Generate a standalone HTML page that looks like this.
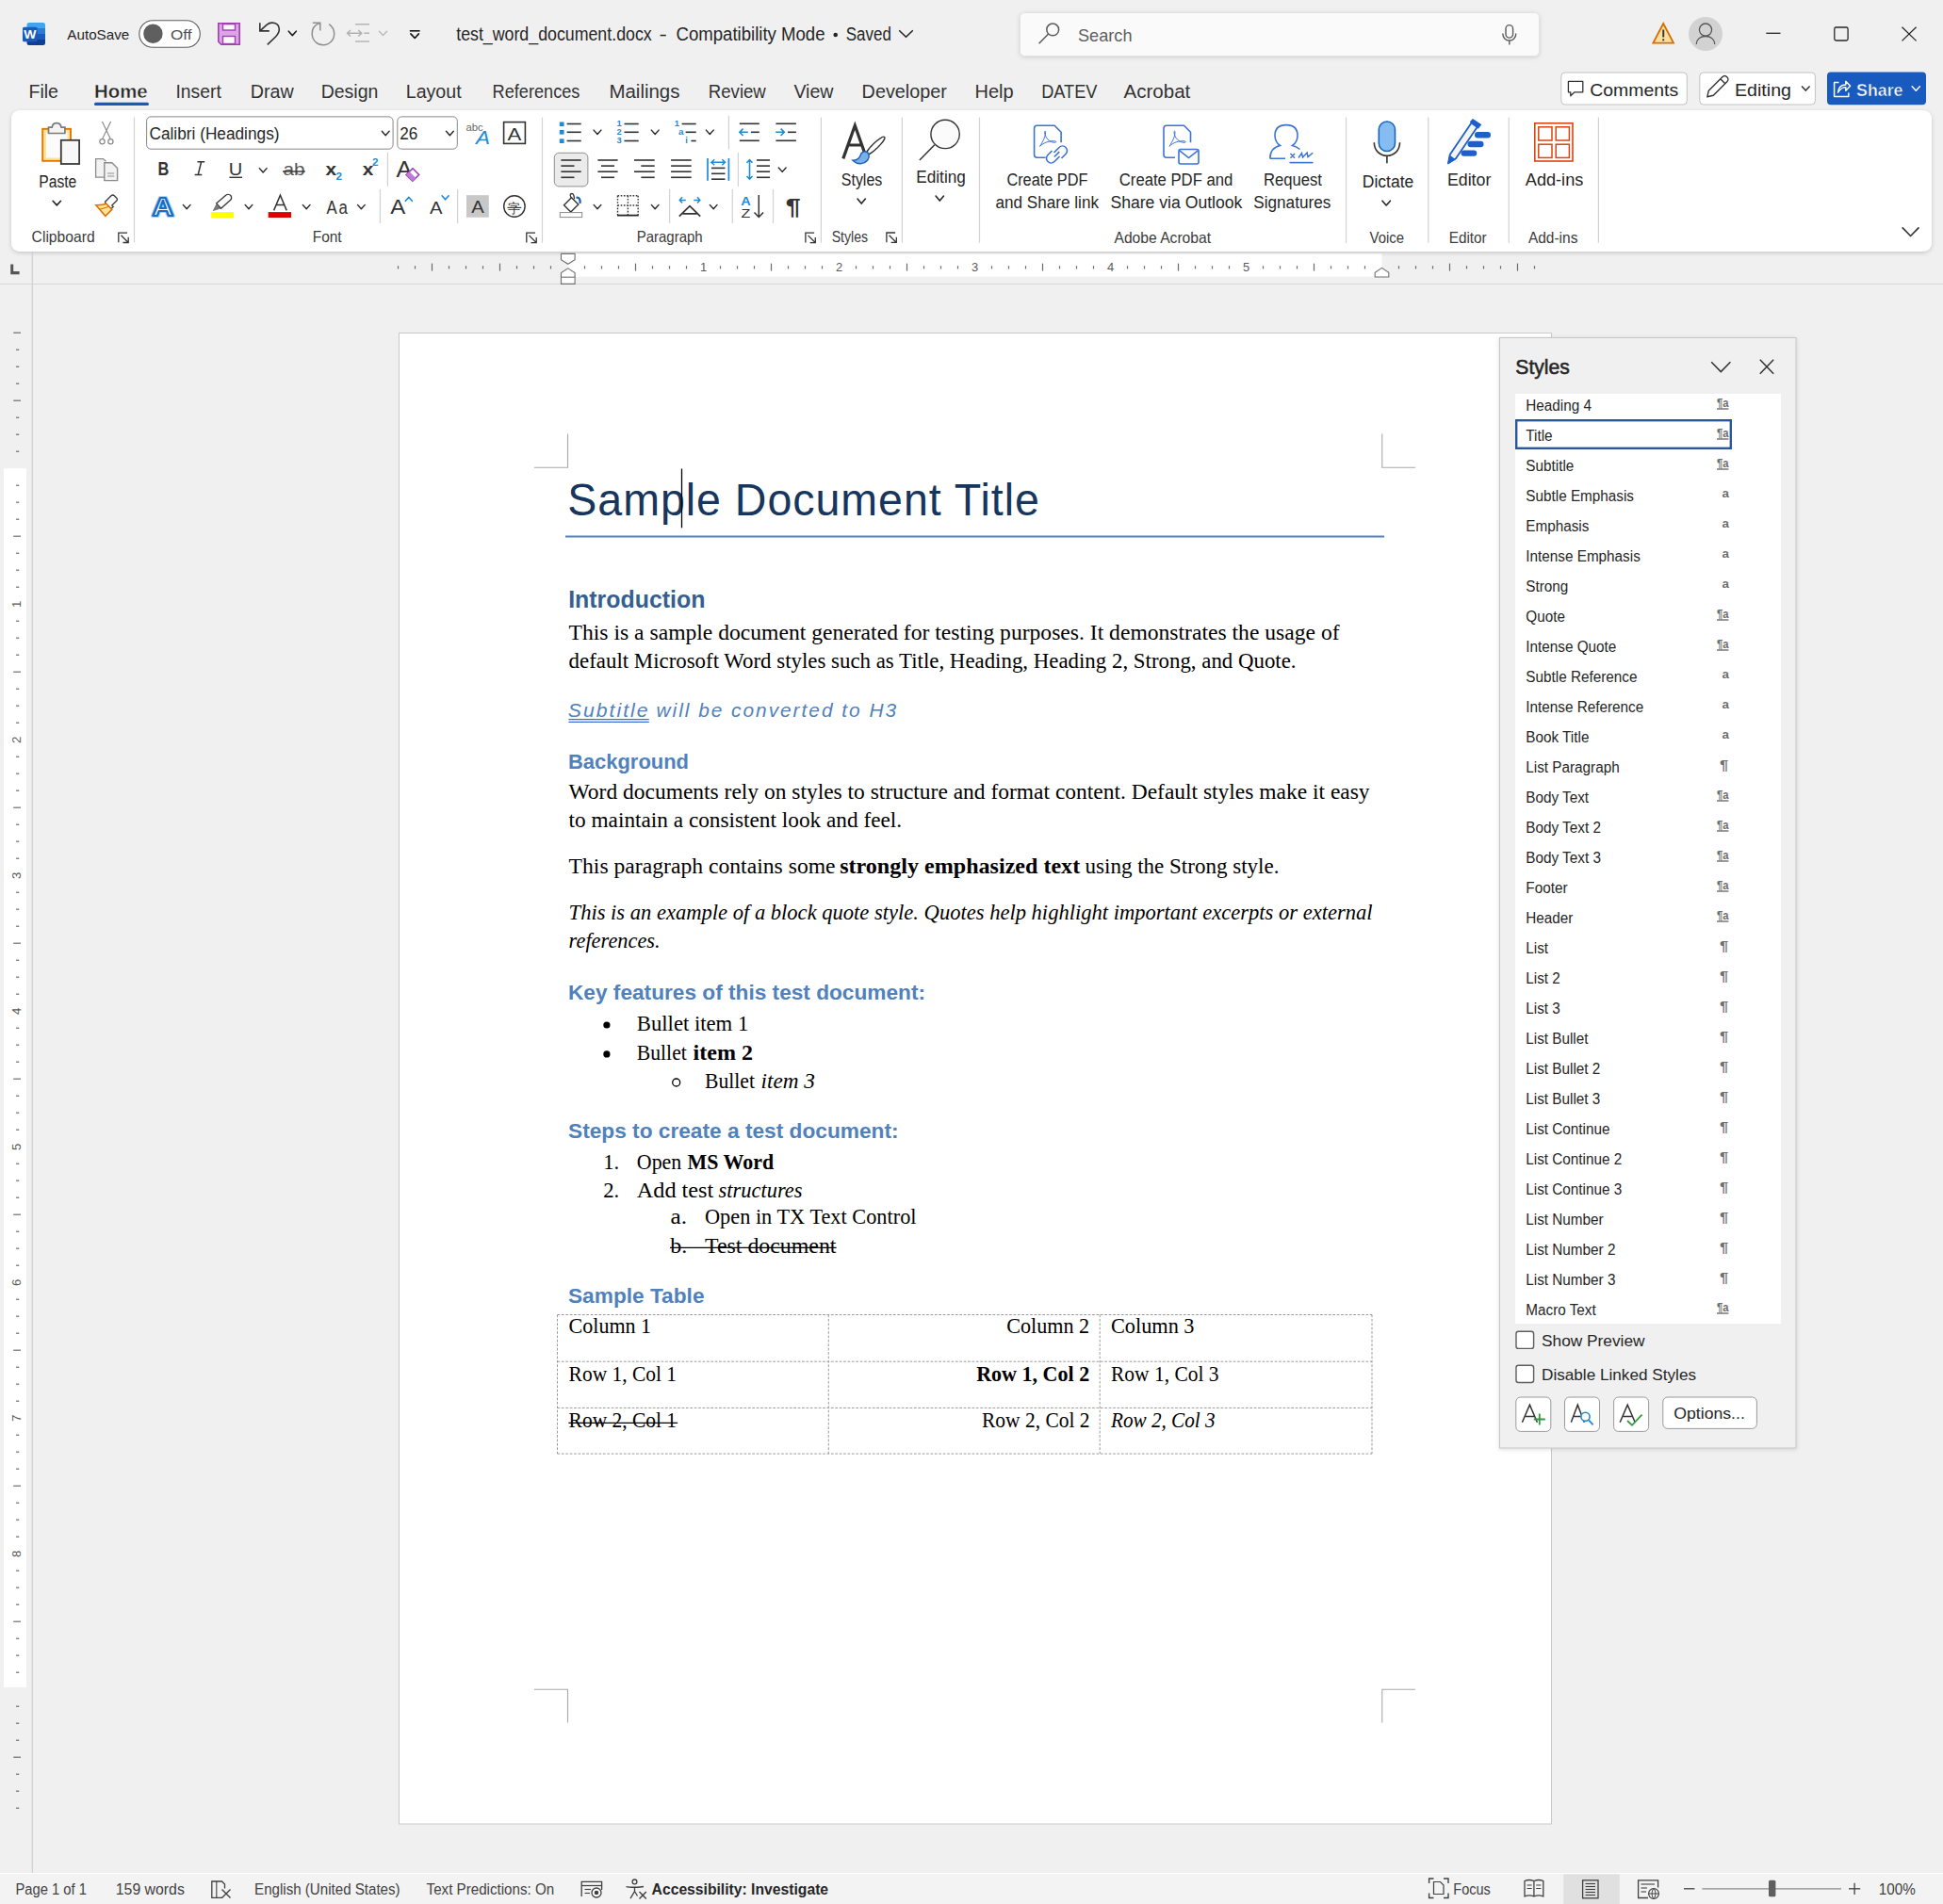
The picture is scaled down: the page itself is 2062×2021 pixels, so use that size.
<!DOCTYPE html>
<html><head><meta charset="utf-8"><title>Word</title>
<style>
html,body{margin:0;padding:0;width:2062px;height:2021px;overflow:hidden;background:#f0f0f0;}
svg{position:absolute;left:0;top:0;display:block;}
.s{font-family:"Liberation Sans",sans-serif;}
.r{font-family:"Liberation Serif",serif;}
</style></head><body>
<svg width="2062" height="2021" viewBox="0 0 2062 2021">
<defs>
<filter id="sh" x="-5%" y="-20%" width="110%" height="150%"><feDropShadow dx="0" dy="1.5" stdDeviation="2" flood-color="#000" flood-opacity="0.18"/></filter>
<filter id="sh2" x="-10%" y="-10%" width="120%" height="120%"><feDropShadow dx="0" dy="1" stdDeviation="2" flood-color="#000" flood-opacity="0.14"/></filter>
</defs>
<rect x="0" y="0" width="2062" height="2021" fill="#f0f0f0"/>
<clipPath id="wclip"><rect x="28.5" y="24" width="19.5" height="24" rx="2.5"/></clipPath>
<g clip-path="url(#wclip)"><rect x="28" y="24" width="20" height="6" fill="#41a5ee"/><rect x="28" y="30" width="20" height="6" fill="#2b7cd3"/><rect x="28" y="36" width="20" height="6" fill="#185abd"/><rect x="28" y="42" width="20" height="6" fill="#103f91"/></g>
<rect x="24" y="28.7" width="15.6" height="15.6" fill="#185abd" rx="1.5"/>
<text class="s" x="25.2" y="40.8" font-size="12.5" textLength="13.2" lengthAdjust="spacingAndGlyphs" font-weight="bold" fill="#ffffff">W</text>
<text class="s" x="71.3" y="41.7" font-size="15" textLength="66.0" lengthAdjust="spacingAndGlyphs" fill="#262626">AutoSave</text>
<rect x="147.8" y="21.7" width="64.5" height="28.6" rx="14.3" fill="#ffffff" stroke="#5c5c5c" stroke-width="1.1"/>
<circle cx="162.4" cy="35.8" r="10.2" fill="#5f5f5f"/>
<text class="s" x="181.0" y="41.9" font-size="15" textLength="22.5" lengthAdjust="spacingAndGlyphs" fill="#505050">Off</text>
<path d="M231.8 24.8 H254.2 V47.2 H234.8 L231.8 44.2 Z" stroke="#a33eb5" stroke-width="1.6" fill="#dca6e6" />
<rect x="236.5" y="25.6" width="13" height="6.4" fill="#fafafa" stroke="#a33eb5" stroke-width="1.4"/>
<rect x="236.5" y="38.5" width="13" height="8" fill="#fafafa" stroke="#a33eb5" stroke-width="1.4"/>
<path d="M275.8 24.2 V32.9 H285.8" stroke="#333333" stroke-width="1.6" fill="none" />
<path d="M276.4 32.3 L283 26.3 C288 22.2 296 24 296.3 31 C296.5 34.5 294.5 36.8 292.5 39 L283.8 47.3" stroke="#333333" stroke-width="1.6" fill="none" />
<path d="M306.3 33.2 L310.3 37.6 L314.3 33.2" stroke="#222" stroke-width="1.6" fill="none" stroke-linecap="round" stroke-linejoin="round"/>
<path d="M331.8 24.2 H339.8 V32.6" stroke="#8f8f8f" stroke-width="1.5" fill="none" />
<path d="M339.8 24.4 C333.5 26.5 330.8 31.5 331.2 36.5 C331.8 43.5 337 47.7 343 47.7 C349.5 47.7 354.7 42.5 354.7 36 C354.7 31.5 352.5 28 349.2 25.6" stroke="#8f8f8f" stroke-width="1.5" fill="none" />
<line x1="377" y1="25.8" x2="392" y2="25.8" stroke="#b0b0b0" stroke-width="1.4" />
<line x1="386.3" y1="35.2" x2="392" y2="35.2" stroke="#b0b0b0" stroke-width="1.4" />
<line x1="377" y1="44" x2="392" y2="44" stroke="#b0b0b0" stroke-width="1.4" />
<path d="M368.5 35.2 H383.8 M372 32 L368.5 35.2 L372 38.4 M380.3 32 L383.8 35.2 L380.3 38.4" stroke="#b0b0b0" stroke-width="1.4" fill="none" />
<path d="M402.5 33.2 L406.5 37.6 L410.5 33.2" stroke="#b8b8b8" stroke-width="1.4" fill="none" stroke-linecap="round" stroke-linejoin="round"/>
<line x1="434.8" y1="32.8" x2="445.6" y2="32.8" stroke="#111" stroke-width="1.6" />
<path d="M435.9 35.9 L440.2 40.5 L444.4 35.9" stroke="#111" stroke-width="1.6" fill="none" stroke-linecap="round" stroke-linejoin="round"/>
<text class="s" x="484.2" y="43.3" font-size="19.5" textLength="207.5" lengthAdjust="spacingAndGlyphs" fill="#262626">test_word_document.docx</text>
<rect x="700.6" y="36.8" width="6.2" height="1.5" fill="#262626" />
<text class="s" x="717.5" y="43.3" font-size="19.5" textLength="158.0" lengthAdjust="spacingAndGlyphs" fill="#262626">Compatibility Mode</text>
<circle cx="886.7" cy="37" r="2.3" fill="#262626"/>
<text class="s" x="897.8" y="43.3" font-size="19.5" textLength="48.0" lengthAdjust="spacingAndGlyphs" fill="#262626">Saved</text>
<path d="M954.7 32.7 L961.5 39.3 L968.3 32.7" stroke="#262626" stroke-width="1.6" fill="none" stroke-linecap="round" stroke-linejoin="round"/>
<rect x="1082.5" y="13.5" width="551" height="46" rx="5" fill="#fafafa" stroke="#e2e2e2" stroke-width="1" filter="url(#sh2)"/>
<circle cx="1117.2" cy="31.4" r="6.4" fill="none" stroke="#5b5b5b" stroke-width="1.5"/>
<line x1="1112.6" y1="36" x2="1102.6" y2="46.2" stroke="#5b5b5b" stroke-width="1.5" />
<text class="s" x="1144.0" y="43.9" font-size="19" textLength="57.5" lengthAdjust="spacingAndGlyphs" fill="#5f5f5f">Search</text>
<rect x="1598" y="26.6" width="7.6" height="13.5" rx="3.8" fill="none" stroke="#5b5b5b" stroke-width="1.4"/>
<path d="M1594.8 35.5 C1594.8 40 1597.8 43 1601.8 43 C1605.8 43 1608.8 40 1608.8 35.5 M1601.8 43 V47.4" stroke="#5b5b5b" stroke-width="1.4" fill="none" />
<path d="M1765.2 25 L1776 45.6 H1754.4 Z" stroke="#d86c00" stroke-width="1.8" fill="#fde0a0" stroke-linejoin="miter"/>
<rect x="1764.3" y="31.5" width="1.9" height="8" fill="#333333" />
<rect x="1764.3" y="41.3" width="1.9" height="2" fill="#333333" />
<circle cx="1810" cy="36" r="18" fill="#d2d2d2"/>
<circle cx="1810" cy="31.6" r="6.6" fill="none" stroke="#555" stroke-width="1.3"/>
<path d="M1800.2 47 C1800.5 41.5 1804.5 38.5 1810 38.5 C1815.5 38.5 1819.5 41.5 1819.8 47" stroke="#555" stroke-width="1.3" fill="none" />
<line x1="1874.3" y1="35.3" x2="1889.5" y2="35.3" stroke="#262626" stroke-width="1.3" />
<rect x="1946.8" y="29" width="14.3" height="14" rx="1.8" fill="none" stroke="#262626" stroke-width="1.3"/>
<line x1="2018.5" y1="28.8" x2="2033.6" y2="43.4" stroke="#262626" stroke-width="1.3" />
<line x1="2033.6" y1="28.8" x2="2018.5" y2="43.4" stroke="#262626" stroke-width="1.3" />
<text class="s" x="30.5" y="104.3" font-size="20.5" textLength="31.5" lengthAdjust="spacingAndGlyphs" fill="#333333">File</text>
<text class="s" x="100.0" y="104.3" font-size="20.5" textLength="56.6" lengthAdjust="spacingAndGlyphs" font-weight="bold" fill="#242424" stroke="#fff" stroke-width="0.35">Home</text>
<text class="s" x="186.5" y="104.3" font-size="20.5" textLength="48.3" lengthAdjust="spacingAndGlyphs" fill="#333333">Insert</text>
<text class="s" x="265.8" y="104.3" font-size="20.5" textLength="45.9" lengthAdjust="spacingAndGlyphs" fill="#333333">Draw</text>
<text class="s" x="340.7" y="104.3" font-size="20.5" textLength="60.7" lengthAdjust="spacingAndGlyphs" fill="#333333">Design</text>
<text class="s" x="430.8" y="104.3" font-size="20.5" textLength="58.8" lengthAdjust="spacingAndGlyphs" fill="#333333">Layout</text>
<text class="s" x="522.6" y="104.3" font-size="20.5" textLength="92.8" lengthAdjust="spacingAndGlyphs" fill="#333333">References</text>
<text class="s" x="646.4" y="104.3" font-size="20.5" textLength="75.1" lengthAdjust="spacingAndGlyphs" fill="#333333">Mailings</text>
<text class="s" x="751.8" y="104.3" font-size="20.5" textLength="61.0" lengthAdjust="spacingAndGlyphs" fill="#333333">Review</text>
<text class="s" x="842.4" y="104.3" font-size="20.5" textLength="42.1" lengthAdjust="spacingAndGlyphs" fill="#333333">View</text>
<text class="s" x="914.6" y="104.3" font-size="20.5" textLength="90.2" lengthAdjust="spacingAndGlyphs" fill="#333333">Developer</text>
<text class="s" x="1034.5" y="104.3" font-size="20.5" textLength="41.1" lengthAdjust="spacingAndGlyphs" fill="#333333">Help</text>
<text class="s" x="1105.2" y="104.3" font-size="20.5" textLength="59.3" lengthAdjust="spacingAndGlyphs" fill="#333333">DATEV</text>
<text class="s" x="1192.6" y="104.3" font-size="20.5" textLength="70.7" lengthAdjust="spacingAndGlyphs" fill="#333333">Acrobat</text>
<rect x="100" y="108.8" width="58" height="3.2" rx="1.6" fill="#1e56b9"/>
<rect x="1656.8" y="77" width="133.5" height="34" rx="4" fill="#ffffff" stroke="#c2c2c2" stroke-width="1"/>
<path d="M1664.4 86.3 H1679.8 V97.8 H1671 L1666.8 101.7 V97.8 H1664.4 Z" stroke="#333" stroke-width="1.3" fill="none" stroke-linejoin="round"/>
<text class="s" x="1687.3" y="102.2" font-size="19" textLength="93.8" lengthAdjust="spacingAndGlyphs" fill="#262626">Comments</text>
<rect x="1803.8" y="77" width="122.6" height="34" rx="4" fill="#ffffff" stroke="#c2c2c2" stroke-width="1"/>
<path d="M1811.8 102.8 L1813.3 96.3 L1827.8 81.8 C1829.3 80.3 1831.3 80.3 1832.8 81.8 C1834.3 83.3 1834.3 85.3 1832.8 86.8 L1818.3 101.3 Z M1825.8 83.8 L1830.8 88.8" stroke="#333" stroke-width="1.4" fill="none" stroke-linejoin="round"/>
<text class="s" x="1841.0" y="102.2" font-size="19" textLength="60.0" lengthAdjust="spacingAndGlyphs" fill="#262626">Editing</text>
<path d="M1912.5 91.9 L1916.3 96.1 L1920.1 91.9" stroke="#333" stroke-width="1.5" fill="none" stroke-linecap="round" stroke-linejoin="round"/>
<rect x="1939" y="76.5" width="105" height="34.8" rx="4" fill="#185abd"/>
<path d="M1951.5 87.5 H1946.6 V102.5 H1961.8 V98.5" stroke="#fff" stroke-width="1.5" fill="none" stroke-linejoin="round"/>
<path d="M1950.5 98.2 C1951 92.8 1954.5 90 1958.8 90 V86.2 L1963.6 91.2 L1958.8 96.2 V92.6 C1955.5 92.6 1952.8 94.5 1950.5 98.2 Z" stroke="#fff" stroke-width="1.4" fill="none" stroke-linejoin="round"/>
<text class="s" x="1970.0" y="102.2" font-size="19" textLength="49.5" lengthAdjust="spacingAndGlyphs" font-weight="bold" fill="#ffffff" stroke="#185abd" stroke-width="0.5">Share</text>
<path d="M2029.2 91.8 L2033.3 96.2 L2037.4 91.8" stroke="#fff" stroke-width="1.5" fill="none" stroke-linecap="round" stroke-linejoin="round"/>
<rect x="12" y="117" width="2038" height="150" rx="9" fill="#ffffff" filter="url(#sh)"/>
<rect x="45.2" y="136.8" width="29.8" height="34" fill="#fce49c" stroke="#e07800" stroke-width="1.9"/>
<rect x="49" y="140.5" width="22.5" height="27" fill="#fbfbfb" />
<path d="M51.5 141.5 V135.2 H55.2 C55.6 131.8 57.4 130.6 60.1 130.6 C62.8 130.6 64.6 131.8 65 135.2 H68.9 V141.5 Z" stroke="#7b7b7b" stroke-width="1.7" fill="#f4f4f4" />
<rect x="64.8" y="148.8" width="19.3" height="25.2" fill="#f8f8f8" stroke="#3a3a3a" stroke-width="1.8"/>
<text class="s" x="41.3" y="198.9" font-size="18" textLength="40.0" lengthAdjust="spacingAndGlyphs" fill="#262626">Paste</text>
<path d="M56.1 213.3 L60.3 217.9 L64.5 213.3" stroke="#262626" stroke-width="1.6" fill="none" stroke-linecap="round" stroke-linejoin="round"/>
<path d="M108.4 129 L117.3 147.6 M117.6 129 L108.6 147.6" stroke="#8c8c8c" stroke-width="1.2" fill="none" />
<circle cx="108.5" cy="150.2" r="2.6" fill="none" stroke="#8c8c8c" stroke-width="1.3"/>
<circle cx="117.4" cy="150.2" r="2.6" fill="none" stroke="#8c8c8c" stroke-width="1.3"/>
<path d="M115 188.2 H101.6 V168.6 H109.5 L112.5 171.2" stroke="#8c8c8c" stroke-width="1.3" fill="#f2f2f2" />
<path d="M110.8 191.6 V172.8 H118.8 L124.6 178.6 V191.6 Z" stroke="#8c8c8c" stroke-width="1.4" fill="#f2f2f2" />
<line x1="114" y1="184" x2="121.2" y2="184" stroke="#9a9a9a" stroke-width="1.1" />
<line x1="114" y1="187" x2="121.2" y2="187" stroke="#9a9a9a" stroke-width="1.1" />
<path d="M111.5 214.3 L118 207.8 C119 206.8 120.3 206.8 121.3 207.8 L123.8 210.3 C124.8 211.3 124.6 212.2 123.6 213.2 L118.8 218 L120.2 219.5 L118 221.7 L112 215.7 Z" stroke="#3a3a3a" stroke-width="1.3" fill="#fbfbfb" />
<path d="M112.8 216.3 C109.5 217.5 106 217.6 101.8 217.8 L111.8 229.3 L118.8 222.4 Z" stroke="#e07000" stroke-width="1.5" fill="#fce49c" />
<path d="M106 222.3 L114.8 219.5" stroke="#e07000" stroke-width="1.2" fill="none" />
<text class="s" x="33.6" y="257.2" font-size="16.5" textLength="67.0" lengthAdjust="spacingAndGlyphs" fill="#3b3b3b">Clipboard</text>
<path d="M125.8 257.3 V247.1 H135.0" stroke="#333" stroke-width="1.3" fill="none" />
<path d="M128.5 249.8 L136.0 257.3 M130.5 257.5 H136.2 V251.8" stroke="#333" stroke-width="1.3" fill="none" />
<line x1="142.5" y1="124.4" x2="142.5" y2="257.4" stroke="#d2d2d2" stroke-width="1.2" />
<rect x="155.6" y="123.9" width="261.5" height="34.3" rx="4.5" fill="#ffffff" stroke="#878787" stroke-width="1"/>
<text class="s" x="158.5" y="147.8" font-size="17.5" textLength="138.0" lengthAdjust="spacingAndGlyphs" fill="#262626">Calibri (Headings)</text>
<path d="M405.3 139.3 L409.2 143.7 L413.1 139.3" stroke="#262626" stroke-width="1.4" fill="none" stroke-linecap="round" stroke-linejoin="round"/>
<rect x="421.8" y="123.9" width="63.5" height="34.3" rx="4.5" fill="#ffffff" stroke="#878787" stroke-width="1"/>
<text class="s" x="424.3" y="147.8" font-size="17.5" textLength="19.0" lengthAdjust="spacingAndGlyphs" fill="#262626">26</text>
<path d="M473.5 139.3 L477.4 143.7 L481.3 139.3" stroke="#262626" stroke-width="1.4" fill="none" stroke-linecap="round" stroke-linejoin="round"/>
<text class="s" x="494.4" y="139.2" font-size="11.5" textLength="18.3" lengthAdjust="spacingAndGlyphs" fill="#6a6a6a">abc</text>
<text class="s" x="505.0" y="153.2" font-size="21" textLength="15.0" lengthAdjust="spacingAndGlyphs" font-style="italic" fill="#1f8ad6">A</text>
<rect x="534.6" y="129.6" width="22.8" height="22.8" fill="none" stroke="#333" stroke-width="1.6"/>
<text class="s" x="538.6" y="148.6" font-size="18.5" textLength="14.8" lengthAdjust="spacingAndGlyphs" fill="#333333">A</text>
<text class="s" x="167.6" y="185.8" font-size="19.6" textLength="11.8" lengthAdjust="spacingAndGlyphs" font-weight="bold" fill="#333333">B</text>
<path d="M209.5 171.8 H217.2 M206.6 185.6 H214.3 M213.6 171.8 L210.2 185.6" stroke="#333" stroke-width="1.5" fill="none" />
<text class="s" x="242.8" y="185.8" font-size="19" textLength="14.5" lengthAdjust="spacingAndGlyphs" fill="#333333">U</text>
<line x1="243.4" y1="188.3" x2="257" y2="188.3" stroke="#333" stroke-width="1.4" />
<path d="M275.3 178.6 L279.2 183.0 L283.1 178.6" stroke="#262626" stroke-width="1.4" fill="none" stroke-linecap="round" stroke-linejoin="round"/>
<text class="s" x="300.5" y="186.0" font-size="17.5" textLength="23.0" lengthAdjust="spacingAndGlyphs" fill="#555555">ab</text>
<line x1="300" y1="182" x2="323.8" y2="182" stroke="#333" stroke-width="1.4" />
<text class="s" x="345.5" y="186.0" font-size="19" textLength="11.6" lengthAdjust="spacingAndGlyphs" font-weight="bold" fill="#333333">x</text>
<text class="s" x="356.5" y="191.0" font-size="10.5" textLength="6.5" lengthAdjust="spacingAndGlyphs" font-weight="bold" fill="#1f8ad6">2</text>
<text class="s" x="384.8" y="186.0" font-size="19" textLength="11.6" lengthAdjust="spacingAndGlyphs" font-weight="bold" fill="#333333">x</text>
<text class="s" x="395.0" y="175.8" font-size="10.5" textLength="6.5" lengthAdjust="spacingAndGlyphs" font-weight="bold" fill="#1f8ad6">2</text>
<line x1="411.4" y1="161.8" x2="411.4" y2="197.8" stroke="#d2d2d2" stroke-width="1.2" />
<text class="s" x="420.6" y="187.5" font-size="24" textLength="17.0" lengthAdjust="spacingAndGlyphs" fill="#333333" font-weight="normal">A</text>
<path d="M431 185.5 L438 178.8 L444.6 185.5 L437.8 192.2 Z" stroke="#9b3fb5" stroke-width="1.6" fill="#ffffff" />
<path d="M431 185.5 L434.5 182.2 L441.3 188.9 L437.8 192.2 Z" stroke="none" stroke-width="0" fill="#c07ad8" />
<text class="s" x="161.6" y="228.8" font-size="28" textLength="22.6" lengthAdjust="spacingAndGlyphs" font-weight="bold" fill="#ffffff" stroke="#a8d4f5" stroke-width="4.2" stroke-linejoin="round">A</text>
<text class="s" x="161.6" y="228.8" font-size="28" textLength="22.6" lengthAdjust="spacingAndGlyphs" font-weight="bold" fill="#ffffff" stroke="#1a6cc4" stroke-width="2.2" stroke-linejoin="round">A</text>
<path d="M194.3 217.4 L198.2 221.8 L202.1 217.4" stroke="#262626" stroke-width="1.4" fill="none" stroke-linecap="round" stroke-linejoin="round"/>
<g transform="translate(225.6,224.2) rotate(-41)"><path d="M0 0 L8 -3.4 V3.4 Z" fill="#777777"/><path d="M8.6 -3.6 H21.8 A3.6 3.6 0 0 1 21.8 3.6 H8.6 Z" fill="#fbfbfb" stroke="#3a3a3a" stroke-width="1.3"/></g>
<rect x="224.2" y="225.1" width="23.8" height="5.9" fill="#ffff00" />
<path d="M260.1 217.4 L264.0 221.8 L267.9 217.4" stroke="#262626" stroke-width="1.4" fill="none" stroke-linecap="round" stroke-linejoin="round"/>
<path d="M290.6 223.4 L297.4 207.3 L304.2 223.4 M293 217.6 H301.8" stroke="#333" stroke-width="1.5" fill="none" />
<rect x="284.7" y="225.1" width="24.3" height="5.9" fill="#e00000" />
<path d="M321.3 217.4 L325.2 221.8 L329.1 217.4" stroke="#262626" stroke-width="1.4" fill="none" stroke-linecap="round" stroke-linejoin="round"/>
<text class="s" x="346.6" y="226.8" font-size="19.5" textLength="24.0" lengthAdjust="spacingAndGlyphs" fill="#333333" letter-spacing="2">Aa</text>
<path d="M379.5 217.4 L383.4 221.8 L387.3 217.4" stroke="#262626" stroke-width="1.4" fill="none" stroke-linecap="round" stroke-linejoin="round"/>
<line x1="403.4" y1="201" x2="403.4" y2="237" stroke="#d2d2d2" stroke-width="1.2" />
<text class="s" x="414.2" y="226.8" font-size="21.5" textLength="16.0" lengthAdjust="spacingAndGlyphs" fill="#333333">A</text>
<path d="M430.3 213.3 L433.8 209.5 L437.3 213.3" stroke="#1f8ad6" stroke-width="1.6" fill="none" stroke-linecap="round"/>
<text class="s" x="456.0" y="226.8" font-size="18" textLength="13.5" lengthAdjust="spacingAndGlyphs" fill="#333333">A</text>
<path d="M469.1 207.8 L472.6 211.8 L476.1 207.8" stroke="#1f8ad6" stroke-width="1.6" fill="none" stroke-linecap="round" stroke-linejoin="round"/>
<line x1="485.6" y1="201" x2="485.6" y2="237" stroke="#d2d2d2" stroke-width="1.2" />
<rect x="495" y="207.2" width="23.8" height="23.5" fill="#c8c8c8" />
<text class="s" x="500.2" y="226.3" font-size="18" textLength="13.5" lengthAdjust="spacingAndGlyphs" fill="#333333">A</text>
<circle cx="545.9" cy="219" r="11.2" fill="none" stroke="#333" stroke-width="1.4"/>
<text class="s" x="539.4" y="225.5" font-size="14" textLength="13.0" lengthAdjust="spacingAndGlyphs" fill="#333333">字</text>
<line x1="538.5" y1="220.4" x2="553.3" y2="220.4" stroke="#333" stroke-width="1.1" />
<text class="s" x="331.7" y="257.2" font-size="16.5" textLength="31.0" lengthAdjust="spacingAndGlyphs" fill="#3b3b3b">Font</text>
<path d="M558.8 257.4 V247.2 H568.0" stroke="#333" stroke-width="1.3" fill="none" />
<path d="M561.5 249.9 L569.0 257.4 M563.5 257.6 H569.2 V251.9" stroke="#333" stroke-width="1.3" fill="none" />
<line x1="575.5" y1="124.5" x2="575.5" y2="257.7" stroke="#d2d2d2" stroke-width="1.2" />
<rect x="593.8" y="129.5" width="4.8" height="4.6" fill="#1f8ad6" />
<rect x="593.8" y="138" width="4.8" height="4.6" fill="#1f8ad6" />
<rect x="593.8" y="147.4" width="4.8" height="4.6" fill="#1f8ad6" />
<line x1="601.6" y1="131.5" x2="616.7" y2="131.5" stroke="#333333" stroke-width="1.6" />
<line x1="601.6" y1="140.3" x2="616.7" y2="140.3" stroke="#333333" stroke-width="1.6" />
<line x1="601.6" y1="149.5" x2="616.7" y2="149.5" stroke="#333333" stroke-width="1.6" />
<path d="M630.1 138.1 L634.0 142.5 L637.9 138.1" stroke="#262626" stroke-width="1.4" fill="none" stroke-linecap="round" stroke-linejoin="round"/>
<text class="s" x="654.5" y="134.4" font-size="9" textLength="5.2" lengthAdjust="spacingAndGlyphs" font-weight="bold" fill="#1f8ad6">1</text>
<text class="s" x="654.5" y="143.3" font-size="9" textLength="5.2" lengthAdjust="spacingAndGlyphs" font-weight="bold" fill="#1f8ad6">2</text>
<text class="s" x="654.5" y="152.2" font-size="9" textLength="5.2" lengthAdjust="spacingAndGlyphs" font-weight="bold" fill="#1f8ad6">3</text>
<line x1="662.5" y1="131.5" x2="677.7" y2="131.5" stroke="#333333" stroke-width="1.6" />
<line x1="662.5" y1="140.3" x2="677.7" y2="140.3" stroke="#333333" stroke-width="1.6" />
<line x1="662.5" y1="149.5" x2="677.7" y2="149.5" stroke="#333333" stroke-width="1.6" />
<path d="M691.3 138.1 L695.2 142.5 L699.1 138.1" stroke="#262626" stroke-width="1.4" fill="none" stroke-linecap="round" stroke-linejoin="round"/>
<text class="s" x="715.8" y="134.4" font-size="9" textLength="5.2" lengthAdjust="spacingAndGlyphs" font-weight="bold" fill="#1f8ad6">1</text>
<text class="s" x="720.0" y="143.3" font-size="9.5" textLength="5.5" lengthAdjust="spacingAndGlyphs" font-weight="bold" fill="#1f8ad6">a</text>
<text class="s" x="727.2" y="151.8" font-size="9.5" textLength="2.6" lengthAdjust="spacingAndGlyphs" font-weight="bold" fill="#1f8ad6">i</text>
<line x1="723.6" y1="131.5" x2="738.7" y2="131.5" stroke="#333333" stroke-width="1.6" />
<line x1="727.6" y1="140.3" x2="738.7" y2="140.3" stroke="#333333" stroke-width="1.6" />
<line x1="733.4" y1="149.5" x2="738.7" y2="149.5" stroke="#333333" stroke-width="1.6" />
<path d="M749.4 138.1 L753.3 142.5 L757.2 138.1" stroke="#262626" stroke-width="1.4" fill="none" stroke-linecap="round" stroke-linejoin="round"/>
<line x1="773.4" y1="123" x2="773.4" y2="158.6" stroke="#d2d2d2" stroke-width="1.2" />
<line x1="784.8" y1="131.3" x2="805.8" y2="131.3" stroke="#333333" stroke-width="1.6" />
<line x1="784.8" y1="149.3" x2="805.8" y2="149.3" stroke="#333333" stroke-width="1.6" />
<line x1="797" y1="140.3" x2="805.8" y2="140.3" stroke="#333333" stroke-width="1.6" />
<path d="M793.8 140.3 H784.9 M788.6 136.6 L784.9 140.3 L788.6 144" stroke="#1f8ad6" stroke-width="1.6" fill="none" />
<line x1="823.4" y1="131.3" x2="844.9" y2="131.3" stroke="#333333" stroke-width="1.6" />
<line x1="823.4" y1="149.3" x2="844.9" y2="149.3" stroke="#333333" stroke-width="1.6" />
<line x1="836" y1="140.3" x2="844.9" y2="140.3" stroke="#333333" stroke-width="1.6" />
<path d="M823.2 140.3 H832.3 M828.6 136.6 L832.3 140.3 L828.6 144" stroke="#1f8ad6" stroke-width="1.6" fill="none" />
<rect x="588.3" y="162.3" width="35.6" height="35.6" rx="5" fill="#ebebeb" stroke="#8e8e8e" stroke-width="1"/>
<line x1="595.4" y1="170" x2="616.7" y2="170" stroke="#333333" stroke-width="1.6" />
<line x1="595.4" y1="176.1" x2="609.458" y2="176.1" stroke="#333333" stroke-width="1.6" />
<line x1="595.4" y1="182.2" x2="616.7" y2="182.2" stroke="#333333" stroke-width="1.6" />
<line x1="595.4" y1="188.3" x2="609.458" y2="188.3" stroke="#333333" stroke-width="1.6" />
<line x1="634.4" y1="170" x2="655.6" y2="170" stroke="#333333" stroke-width="1.6" />
<line x1="638.004" y1="176.1" x2="651.996" y2="176.1" stroke="#333333" stroke-width="1.6" />
<line x1="634.4" y1="182.2" x2="655.6" y2="182.2" stroke="#333333" stroke-width="1.6" />
<line x1="638.004" y1="188.3" x2="651.996" y2="188.3" stroke="#333333" stroke-width="1.6" />
<line x1="673" y1="170" x2="694.7" y2="170" stroke="#333333" stroke-width="1.6" />
<line x1="680.378" y1="176.1" x2="694.7" y2="176.1" stroke="#333333" stroke-width="1.6" />
<line x1="673" y1="182.2" x2="694.7" y2="182.2" stroke="#333333" stroke-width="1.6" />
<line x1="680.378" y1="188.3" x2="694.7" y2="188.3" stroke="#333333" stroke-width="1.6" />
<line x1="712.1" y1="170" x2="733.7" y2="170" stroke="#333333" stroke-width="1.6" />
<line x1="712.1" y1="176.1" x2="733.7" y2="176.1" stroke="#333333" stroke-width="1.6" />
<line x1="712.1" y1="182.2" x2="733.7" y2="182.2" stroke="#333333" stroke-width="1.6" />
<line x1="712.1" y1="188.3" x2="733.7" y2="188.3" stroke="#333333" stroke-width="1.6" />
<line x1="751" y1="168" x2="751" y2="191.8" stroke="#1f8ad6" stroke-width="1.7" />
<line x1="773.4" y1="168" x2="773.4" y2="191.8" stroke="#1f8ad6" stroke-width="1.7" />
<path d="M755 172.2 H769.5 M758.2 169.2 L755 172.2 L758.2 175.2 M766.3 169.2 L769.5 172.2 L766.3 175.2" stroke="#1f8ad6" stroke-width="1.5" fill="none" />
<line x1="755" y1="178.4" x2="769.5" y2="178.4" stroke="#333333" stroke-width="1.6" />
<line x1="755" y1="184.3" x2="769.5" y2="184.3" stroke="#333333" stroke-width="1.6" />
<line x1="755" y1="190.2" x2="769.5" y2="190.2" stroke="#333333" stroke-width="1.6" />
<line x1="783.4" y1="162" x2="783.4" y2="198" stroke="#d2d2d2" stroke-width="1.2" />
<path d="M795.5 169.6 V190.2 M792.5 172.8 L795.5 169.6 L798.5 172.8 M792.5 187 L795.5 190.2 L798.5 187" stroke="#1f8ad6" stroke-width="1.6" fill="none" />
<line x1="803" y1="170" x2="817" y2="170" stroke="#333333" stroke-width="1.6" />
<line x1="803" y1="176.1" x2="817" y2="176.1" stroke="#333333" stroke-width="1.6" />
<line x1="803" y1="182.2" x2="817" y2="182.2" stroke="#333333" stroke-width="1.6" />
<line x1="803" y1="188.3" x2="817" y2="188.3" stroke="#333333" stroke-width="1.6" />
<path d="M826.3 178.0 L830.2 182.4 L834.1 178.0" stroke="#262626" stroke-width="1.4" fill="none" stroke-linecap="round" stroke-linejoin="round"/>
<path d="M598.5 217.8 L606.5 209.8 L613.8 217.1 L605.8 225.1 Z" stroke="#333333" stroke-width="1.4" fill="#ffffff" />
<path d="M606.2 209.8 C604.5 207 605 205.5 607 205.5 C608.7 205.5 609.2 207.5 609.6 211.3" stroke="#333333" stroke-width="1.3" fill="none" />
<path d="M611.5 209.8 C614.5 209.2 616.2 211.5 615.5 216" stroke="#1f5fb5" stroke-width="2.2" fill="none" />
<rect x="594.3" y="225.6" width="23.4" height="5" fill="#ffffff" stroke="#8a8a8a" stroke-width="1"/>
<path d="M630.1 217.4 L634.0 221.8 L637.9 217.4" stroke="#262626" stroke-width="1.4" fill="none" stroke-linecap="round" stroke-linejoin="round"/>
<g stroke="#333" stroke-width="1.4" stroke-dasharray="1.6 1.6" fill="none"><path d="M655.5 207.8 H677.2 M655.5 207.8 V228.3 M677.2 207.8 V228.3 M666.4 207.8 V228.3 M655.5 218 H677.2"/></g>
<line x1="655" y1="228.6" x2="677.7" y2="228.6" stroke="#262626" stroke-width="1.8" />
<path d="M691.3 217.4 L695.2 221.8 L699.1 217.4" stroke="#262626" stroke-width="1.4" fill="none" stroke-linecap="round" stroke-linejoin="round"/>
<line x1="710.6" y1="201" x2="710.6" y2="237" stroke="#d2d2d2" stroke-width="1.2" />
<path d="M720.8 229.6 L732 218.6 L743.2 229.6 M724.5 226.8 H739.5" stroke="#333333" stroke-width="1.7" fill="none" />
<path d="M721.3 212.4 H727.8 M724.1 209.3 L721.3 212.4 L724.1 215.5 M736.3 212.4 H742.8 M740 209.3 L742.8 212.4 L740 215.5" stroke="#1f8ad6" stroke-width="1.5" fill="none" />
<path d="M753.3 217.4 L757.2 221.8 L761.1 217.4" stroke="#262626" stroke-width="1.4" fill="none" stroke-linecap="round" stroke-linejoin="round"/>
<line x1="777.3" y1="201" x2="777.3" y2="237" stroke="#d2d2d2" stroke-width="1.2" />
<text class="s" x="786.3" y="217.5" font-size="13" textLength="10.5" lengthAdjust="spacingAndGlyphs" font-weight="bold" fill="#1f8ad6">A</text>
<text class="s" x="786.6" y="231.0" font-size="13" textLength="9.8" lengthAdjust="spacingAndGlyphs" fill="#333333">Z</text>
<path d="M805.3 207 V230.4 M800.5 225.4 L805.3 230.4 L810.1 225.4" stroke="#333333" stroke-width="1.5" fill="none" />
<line x1="820.5" y1="201" x2="820.5" y2="237" stroke="#d2d2d2" stroke-width="1.2" />
<text class="s" x="833.8" y="228.3" font-size="23" textLength="16.0" lengthAdjust="spacingAndGlyphs" font-weight="bold" fill="#333333">¶</text>
<text class="s" x="675.7" y="257.2" font-size="16.5" textLength="70.0" lengthAdjust="spacingAndGlyphs" fill="#3b3b3b">Paragraph</text>
<path d="M854.9 257.4 V247.2 H864.1" stroke="#333" stroke-width="1.3" fill="none" />
<path d="M857.6 249.9 L865.1 257.4 M859.6 257.6 H865.3 V251.9" stroke="#333" stroke-width="1.3" fill="none" />
<line x1="871.4" y1="124.5" x2="871.4" y2="257.7" stroke="#d2d2d2" stroke-width="1.2" />
<path d="M894.8 168.4 L907.3 133.2 L919.8 168.4 M899.8 154 H914.8" stroke="#333" stroke-width="3.2" fill="none" />
<ellipse cx="929.2" cy="154.6" rx="13.2" ry="2.9" transform="rotate(-44 929.2 154.6)" fill="#ffffff" stroke="#333" stroke-width="1.3"/>
<path d="M905 170.2 C910.5 170.5 912.8 167 914 162.8 C916.5 159.8 921 160.5 922 163.8 C923.2 168 920 172.8 914.2 173.6 C911 174 907.5 172.8 905 170.2 Z" stroke="#1a5fb4" stroke-width="1.4" fill="#79b0ea" />
<text class="s" x="892.8" y="196.8" font-size="18" textLength="43.5" lengthAdjust="spacingAndGlyphs" fill="#262626">Styles</text>
<path d="M910.0 211.1 L914.2 216.1 L918.4 211.1" stroke="#262626" stroke-width="1.6" fill="none" stroke-linecap="round" stroke-linejoin="round"/>
<text class="s" x="882.7" y="257.3" font-size="16.5" textLength="38.5" lengthAdjust="spacingAndGlyphs" fill="#3b3b3b">Styles</text>
<path d="M940.9 257.2 V247.0 H950.1" stroke="#333" stroke-width="1.3" fill="none" />
<path d="M943.6 249.7 L951.1 257.2 M945.6 257.4 H951.3 V251.7" stroke="#333" stroke-width="1.3" fill="none" />
<line x1="957.4" y1="124.5" x2="957.4" y2="257.7" stroke="#d2d2d2" stroke-width="1.2" />
<circle cx="1003.1" cy="142.4" r="15.2" fill="#fbfbfb" stroke="#333" stroke-width="1.4"/>
<line x1="991.8" y1="153.8" x2="975.9" y2="170" stroke="#333" stroke-width="1.5" />
<text class="s" x="972.3" y="194.0" font-size="18" textLength="52.5" lengthAdjust="spacingAndGlyphs" fill="#262626">Editing</text>
<path d="M993.1 208.1 L997.3 213.1 L1001.5 208.1" stroke="#262626" stroke-width="1.6" fill="none" stroke-linecap="round" stroke-linejoin="round"/>
<line x1="1039.5" y1="124.5" x2="1039.5" y2="257.7" stroke="#d2d2d2" stroke-width="1.2" />
<path d="M1109.6 167.3 H1100.6 C1098.8 167.3 1097.6 166.1 1097.6 164.3 V136.3 C1097.6 134.5 1098.8 133.3 1100.6 133.3 H1119.1 L1126.1 140.3 V151.3" stroke="#3b73d9" stroke-width="1.6" fill="none" />
<path d="M1103.6 155.3 C1106.6 150.3 1109.6 145.3 1109.6 140.3 C1109.6 138.8 1108.6 138.8 1108.6 140.3 C1109.1 146.3 1113.6 151.3 1119.6 151.3 C1121.1 151.3 1121.1 149.8 1119.6 149.8 C1113.6 149.3 1107.6 151.3 1103.6 155.3 Z" stroke="#3b73d9" stroke-width="1.0" fill="none" />
<path d="M1118.5 162 L1124 156.5 C1126 154.5 1129 154.5 1131 156.5 C1133 158.5 1133 161.5 1131 163.5 L1126.5 168 M1124.5 166 L1119 171.5 C1117 173.5 1114 173.5 1112 171.5 C1110 169.5 1110 166.5 1112 164.5 L1116.5 160 M1118.8 166.5 L1124.2 161.1" stroke="#3b73d9" stroke-width="1.6" fill="none" />
<text class="s" x="1068.4" y="197.3" font-size="18" textLength="86.0" lengthAdjust="spacingAndGlyphs" fill="#262626">Create PDF</text>
<text class="s" x="1056.5" y="221.0" font-size="18" textLength="109.5" lengthAdjust="spacingAndGlyphs" fill="#262626">and Share link</text>
<path d="M1247.0 167.3 H1238.0 C1236.2 167.3 1235.0 166.1 1235.0 164.3 V136.3 C1235.0 134.5 1236.2 133.3 1238.0 133.3 H1256.5 L1263.5 140.3 V151.3" stroke="#3b73d9" stroke-width="1.6" fill="none" />
<path d="M1241.0 155.3 C1244.0 150.3 1247.0 145.3 1247.0 140.3 C1247.0 138.8 1246.0 138.8 1246.0 140.3 C1246.5 146.3 1251.0 151.3 1257.0 151.3 C1258.5 151.3 1258.5 149.8 1257.0 149.8 C1251.0 149.3 1245.0 151.3 1241.0 155.3 Z" stroke="#3b73d9" stroke-width="1.0" fill="none" />
<rect x="1251" y="158.5" width="21" height="15.5" rx="2" fill="#ffffff" stroke="#3b73d9" stroke-width="1.6"/>
<path d="M1251.8 159.8 L1261.5 167.5 L1271.2 159.8" stroke="#3b73d9" stroke-width="1.5" fill="none" />
<text class="s" x="1187.8" y="197.3" font-size="18" textLength="120.5" lengthAdjust="spacingAndGlyphs" fill="#262626">Create PDF and</text>
<text class="s" x="1178.4" y="221.0" font-size="18" textLength="140.0" lengthAdjust="spacingAndGlyphs" fill="#262626">Share via Outlook</text>
<path d="M1347.8 168.3 C1347.8 160 1352 156 1358.5 154.5 C1354.5 151.8 1353 148 1353 144 C1353 137 1357 132.6 1365 132.6 C1373 132.6 1377 137 1377 144 C1377 148 1375.5 151.8 1371.5 154.5 C1374.5 155.2 1377.3 156.5 1379.5 158.5 M1347.8 168.3 H1364" stroke="#3b73d9" stroke-width="1.6" fill="none" />
<path d="M1369.5 163 L1374 167.8 M1374 163 L1369.5 167.8 M1378 167.5 L1381.5 162.5 L1382.5 167 L1387.2 162 L1388 166.6 L1393.2 162.3" stroke="#3b73d9" stroke-width="1.4" fill="none" />
<line x1="1368.5" y1="172.6" x2="1393.5" y2="172.6" stroke="#3b73d9" stroke-width="1.6" />
<text class="s" x="1341.0" y="197.3" font-size="18" textLength="62.0" lengthAdjust="spacingAndGlyphs" fill="#262626">Request</text>
<text class="s" x="1330.3" y="221.0" font-size="18" textLength="82.0" lengthAdjust="spacingAndGlyphs" fill="#262626">Signatures</text>
<text class="s" x="1182.5" y="257.6" font-size="16.5" textLength="102.5" lengthAdjust="spacingAndGlyphs" fill="#3b3b3b">Adobe Acrobat</text>
<line x1="1428.5" y1="124.5" x2="1428.5" y2="257.7" stroke="#d2d2d2" stroke-width="1.2" />
<rect x="1463.3" y="129" width="17.2" height="31.5" rx="8.6" fill="#86bdf0" stroke="#1a64c0" stroke-width="1.6"/>
<path d="M1458.3 151.3 C1458.3 159.5 1464.2 165.3 1471.9 165.3 C1479.6 165.3 1485.5 159.5 1485.5 151.3 M1471.9 165.3 V173.3" stroke="#333" stroke-width="1.6" fill="none" />
<text class="s" x="1445.8" y="198.8" font-size="18" textLength="54.5" lengthAdjust="spacingAndGlyphs" fill="#262626">Dictate</text>
<path d="M1467.0 213.2 L1471.2 218.0 L1475.4 213.2" stroke="#262626" stroke-width="1.6" fill="none" stroke-linecap="round" stroke-linejoin="round"/>
<text class="s" x="1453.6" y="257.6" font-size="16.5" textLength="36.5" lengthAdjust="spacingAndGlyphs" fill="#3b3b3b">Voice</text>
<line x1="1515.8" y1="124.5" x2="1515.8" y2="257.7" stroke="#d2d2d2" stroke-width="1.2" />
<path d="M1537 173.2 L1538.8 164 L1561.5 130.6 L1567.8 134.8 L1545 168.2 Z" stroke="#1f5fc9" stroke-width="1.8" fill="#f4f4f4" stroke-linejoin="round"/>
<path d="M1560.6 129.5 L1563 126.8 L1571.5 132.3 L1568.6 136 Z" stroke="#1f5fc9" stroke-width="1.2" fill="#1f5fc9" />
<g fill="#1f5fc9"><rect x="1565" y="140" width="17" height="6.4" rx="3.2"/><rect x="1557.5" y="149.8" width="17" height="6.4" rx="3.2"/><rect x="1550.5" y="159.4" width="16.8" height="6.4" rx="3.2"/></g>
<path d="M1537 173.2 L1538.6 165.5 L1543.8 169.2 Z" stroke="#1f5fc9" stroke-width="1.2" fill="#1f5fc9" />
<text class="s" x="1535.9" y="197.0" font-size="18" textLength="46.5" lengthAdjust="spacingAndGlyphs" fill="#262626">Editor</text>
<text class="s" x="1537.7" y="257.6" font-size="16.5" textLength="40.0" lengthAdjust="spacingAndGlyphs" fill="#3b3b3b">Editor</text>
<line x1="1601.3" y1="124.5" x2="1601.3" y2="257.7" stroke="#d2d2d2" stroke-width="1.2" />
<rect x="1628.8" y="130.8" width="40.2" height="40.2" fill="none" stroke="#d9460f" stroke-width="1.6"/>
<rect x="1632.8" y="134.8" width="14.2" height="14.2" fill="none" stroke="#d9460f" stroke-width="1.5"/>
<rect x="1651.2" y="134.8" width="14.2" height="14.2" fill="none" stroke="#d9460f" stroke-width="1.5"/>
<rect x="1632.8" y="153.2" width="14.2" height="14.2" fill="none" stroke="#d9460f" stroke-width="1.5"/>
<rect x="1651.2" y="153.2" width="14.2" height="14.2" fill="none" stroke="#d9460f" stroke-width="1.5"/>
<text class="s" x="1618.8" y="197.0" font-size="18" textLength="61.5" lengthAdjust="spacingAndGlyphs" fill="#262626">Add-ins</text>
<text class="s" x="1621.9" y="257.6" font-size="16.5" textLength="52.5" lengthAdjust="spacingAndGlyphs" fill="#3b3b3b">Add-ins</text>
<line x1="1696.4" y1="124.5" x2="1696.4" y2="257.7" stroke="#d2d2d2" stroke-width="1.2" />
<path d="M2019.2 241.9 L2027.6 250.5 L2036.0 241.9" stroke="#333" stroke-width="1.6" fill="none" stroke-linecap="round" stroke-linejoin="round"/>
<line x1="34.3" y1="267" x2="34.3" y2="1988" stroke="#d0d0d0" stroke-width="1.2" />
<line x1="0" y1="301.5" x2="2062" y2="301.5" stroke="#d6d6d6" stroke-width="1.1" />
<path d="M11.2 280.6 H14.2 V288 H20.6 V291.2 H11.2 Z" fill="#555555"/>
<rect x="602.5" y="269.5" width="864" height="24.3" fill="#ffffff" />
<line x1="422.5" y1="282.2" x2="422.5" y2="285.4" stroke="#6b6b6b" stroke-width="1.2" />
<line x1="440.5" y1="282.2" x2="440.5" y2="285.4" stroke="#6b6b6b" stroke-width="1.2" />
<line x1="458.5" y1="279.6" x2="458.5" y2="287.6" stroke="#6b6b6b" stroke-width="1.2" />
<line x1="476.5" y1="282.2" x2="476.5" y2="285.4" stroke="#6b6b6b" stroke-width="1.2" />
<line x1="494.5" y1="282.2" x2="494.5" y2="285.4" stroke="#6b6b6b" stroke-width="1.2" />
<line x1="512.5" y1="282.2" x2="512.5" y2="285.4" stroke="#6b6b6b" stroke-width="1.2" />
<line x1="530.5" y1="279.6" x2="530.5" y2="287.6" stroke="#6b6b6b" stroke-width="1.2" />
<line x1="548.5" y1="282.2" x2="548.5" y2="285.4" stroke="#6b6b6b" stroke-width="1.2" />
<line x1="566.5" y1="282.2" x2="566.5" y2="285.4" stroke="#6b6b6b" stroke-width="1.2" />
<line x1="584.5" y1="282.2" x2="584.5" y2="285.4" stroke="#6b6b6b" stroke-width="1.2" />
<line x1="620.5" y1="282.2" x2="620.5" y2="285.4" stroke="#6b6b6b" stroke-width="1.2" />
<line x1="638.5" y1="282.2" x2="638.5" y2="285.4" stroke="#6b6b6b" stroke-width="1.2" />
<line x1="656.5" y1="282.2" x2="656.5" y2="285.4" stroke="#6b6b6b" stroke-width="1.2" />
<line x1="674.5" y1="279.6" x2="674.5" y2="287.6" stroke="#6b6b6b" stroke-width="1.2" />
<line x1="692.5" y1="282.2" x2="692.5" y2="285.4" stroke="#6b6b6b" stroke-width="1.2" />
<line x1="710.5" y1="282.2" x2="710.5" y2="285.4" stroke="#6b6b6b" stroke-width="1.2" />
<line x1="728.5" y1="282.2" x2="728.5" y2="285.4" stroke="#6b6b6b" stroke-width="1.2" />
<text class="s" x="742.9" y="288.2" font-size="13.5" textLength="7.2" lengthAdjust="spacingAndGlyphs" fill="#5a5a5a">1</text>
<line x1="764.5" y1="282.2" x2="764.5" y2="285.4" stroke="#6b6b6b" stroke-width="1.2" />
<line x1="782.5" y1="282.2" x2="782.5" y2="285.4" stroke="#6b6b6b" stroke-width="1.2" />
<line x1="800.5" y1="282.2" x2="800.5" y2="285.4" stroke="#6b6b6b" stroke-width="1.2" />
<line x1="818.5" y1="279.6" x2="818.5" y2="287.6" stroke="#6b6b6b" stroke-width="1.2" />
<line x1="836.5" y1="282.2" x2="836.5" y2="285.4" stroke="#6b6b6b" stroke-width="1.2" />
<line x1="854.5" y1="282.2" x2="854.5" y2="285.4" stroke="#6b6b6b" stroke-width="1.2" />
<line x1="872.5" y1="282.2" x2="872.5" y2="285.4" stroke="#6b6b6b" stroke-width="1.2" />
<text class="s" x="886.9" y="288.2" font-size="13.5" textLength="7.2" lengthAdjust="spacingAndGlyphs" fill="#5a5a5a">2</text>
<line x1="908.5" y1="282.2" x2="908.5" y2="285.4" stroke="#6b6b6b" stroke-width="1.2" />
<line x1="926.5" y1="282.2" x2="926.5" y2="285.4" stroke="#6b6b6b" stroke-width="1.2" />
<line x1="944.5" y1="282.2" x2="944.5" y2="285.4" stroke="#6b6b6b" stroke-width="1.2" />
<line x1="962.5" y1="279.6" x2="962.5" y2="287.6" stroke="#6b6b6b" stroke-width="1.2" />
<line x1="980.5" y1="282.2" x2="980.5" y2="285.4" stroke="#6b6b6b" stroke-width="1.2" />
<line x1="998.5" y1="282.2" x2="998.5" y2="285.4" stroke="#6b6b6b" stroke-width="1.2" />
<line x1="1016.5" y1="282.2" x2="1016.5" y2="285.4" stroke="#6b6b6b" stroke-width="1.2" />
<text class="s" x="1030.9" y="288.2" font-size="13.5" textLength="7.2" lengthAdjust="spacingAndGlyphs" fill="#5a5a5a">3</text>
<line x1="1052.5" y1="282.2" x2="1052.5" y2="285.4" stroke="#6b6b6b" stroke-width="1.2" />
<line x1="1070.5" y1="282.2" x2="1070.5" y2="285.4" stroke="#6b6b6b" stroke-width="1.2" />
<line x1="1088.5" y1="282.2" x2="1088.5" y2="285.4" stroke="#6b6b6b" stroke-width="1.2" />
<line x1="1106.5" y1="279.6" x2="1106.5" y2="287.6" stroke="#6b6b6b" stroke-width="1.2" />
<line x1="1124.5" y1="282.2" x2="1124.5" y2="285.4" stroke="#6b6b6b" stroke-width="1.2" />
<line x1="1142.5" y1="282.2" x2="1142.5" y2="285.4" stroke="#6b6b6b" stroke-width="1.2" />
<line x1="1160.5" y1="282.2" x2="1160.5" y2="285.4" stroke="#6b6b6b" stroke-width="1.2" />
<text class="s" x="1174.9" y="288.2" font-size="13.5" textLength="7.2" lengthAdjust="spacingAndGlyphs" fill="#5a5a5a">4</text>
<line x1="1196.5" y1="282.2" x2="1196.5" y2="285.4" stroke="#6b6b6b" stroke-width="1.2" />
<line x1="1214.5" y1="282.2" x2="1214.5" y2="285.4" stroke="#6b6b6b" stroke-width="1.2" />
<line x1="1232.5" y1="282.2" x2="1232.5" y2="285.4" stroke="#6b6b6b" stroke-width="1.2" />
<line x1="1250.5" y1="279.6" x2="1250.5" y2="287.6" stroke="#6b6b6b" stroke-width="1.2" />
<line x1="1268.5" y1="282.2" x2="1268.5" y2="285.4" stroke="#6b6b6b" stroke-width="1.2" />
<line x1="1286.5" y1="282.2" x2="1286.5" y2="285.4" stroke="#6b6b6b" stroke-width="1.2" />
<line x1="1304.5" y1="282.2" x2="1304.5" y2="285.4" stroke="#6b6b6b" stroke-width="1.2" />
<text class="s" x="1318.9" y="288.2" font-size="13.5" textLength="7.2" lengthAdjust="spacingAndGlyphs" fill="#5a5a5a">5</text>
<line x1="1340.5" y1="282.2" x2="1340.5" y2="285.4" stroke="#6b6b6b" stroke-width="1.2" />
<line x1="1358.5" y1="282.2" x2="1358.5" y2="285.4" stroke="#6b6b6b" stroke-width="1.2" />
<line x1="1376.5" y1="282.2" x2="1376.5" y2="285.4" stroke="#6b6b6b" stroke-width="1.2" />
<line x1="1394.5" y1="279.6" x2="1394.5" y2="287.6" stroke="#6b6b6b" stroke-width="1.2" />
<line x1="1412.5" y1="282.2" x2="1412.5" y2="285.4" stroke="#6b6b6b" stroke-width="1.2" />
<line x1="1430.5" y1="282.2" x2="1430.5" y2="285.4" stroke="#6b6b6b" stroke-width="1.2" />
<line x1="1448.5" y1="282.2" x2="1448.5" y2="285.4" stroke="#6b6b6b" stroke-width="1.2" />
<line x1="1484.5" y1="282.2" x2="1484.5" y2="285.4" stroke="#6b6b6b" stroke-width="1.2" />
<line x1="1502.5" y1="282.2" x2="1502.5" y2="285.4" stroke="#6b6b6b" stroke-width="1.2" />
<line x1="1520.5" y1="282.2" x2="1520.5" y2="285.4" stroke="#6b6b6b" stroke-width="1.2" />
<line x1="1538.5" y1="279.6" x2="1538.5" y2="287.6" stroke="#6b6b6b" stroke-width="1.2" />
<line x1="1556.5" y1="282.2" x2="1556.5" y2="285.4" stroke="#6b6b6b" stroke-width="1.2" />
<line x1="1574.5" y1="282.2" x2="1574.5" y2="285.4" stroke="#6b6b6b" stroke-width="1.2" />
<line x1="1592.5" y1="282.2" x2="1592.5" y2="285.4" stroke="#6b6b6b" stroke-width="1.2" />
<line x1="1610.5" y1="279.6" x2="1610.5" y2="287.6" stroke="#6b6b6b" stroke-width="1.2" />
<line x1="1628.5" y1="282.2" x2="1628.5" y2="285.4" stroke="#6b6b6b" stroke-width="1.2" />
<path d="M595.5 269.4 H610.1 V275.6 L602.8 280.3 L595.5 275.6 Z" stroke="#707070" stroke-width="1.1" fill="#ffffff" />
<path d="M595.5 301.4 V289.6 L602.8 284.8 L610.1 289.6 V301.4 Z" stroke="#707070" stroke-width="1.1" fill="#ffffff" />
<line x1="595.5" y1="294.2" x2="610.1" y2="294.2" stroke="#707070" stroke-width="1.1" />
<path d="M1459.2 294 V289.2 L1466.5 284.4 L1473.8 289.2 V294 Z" stroke="#707070" stroke-width="1.1" fill="#ffffff" />
<rect x="4" y="497.2" width="24" height="1293.8" fill="#ffffff" />
<line x1="14.2" y1="353.2" x2="22" y2="353.2" stroke="#6b6b6b" stroke-width="1.2" />
<line x1="17" y1="371.2" x2="20.3" y2="371.2" stroke="#6b6b6b" stroke-width="1.2" />
<line x1="17" y1="389.2" x2="20.3" y2="389.2" stroke="#6b6b6b" stroke-width="1.2" />
<line x1="17" y1="407.2" x2="20.3" y2="407.2" stroke="#6b6b6b" stroke-width="1.2" />
<line x1="14.2" y1="425.2" x2="22" y2="425.2" stroke="#6b6b6b" stroke-width="1.2" />
<line x1="17" y1="443.2" x2="20.3" y2="443.2" stroke="#6b6b6b" stroke-width="1.2" />
<line x1="17" y1="461.2" x2="20.3" y2="461.2" stroke="#6b6b6b" stroke-width="1.2" />
<line x1="17" y1="479.2" x2="20.3" y2="479.2" stroke="#6b6b6b" stroke-width="1.2" />
<line x1="17" y1="515.2" x2="20.3" y2="515.2" stroke="#6b6b6b" stroke-width="1.2" />
<line x1="17" y1="533.2" x2="20.3" y2="533.2" stroke="#6b6b6b" stroke-width="1.2" />
<line x1="17" y1="551.2" x2="20.3" y2="551.2" stroke="#6b6b6b" stroke-width="1.2" />
<line x1="14.2" y1="569.2" x2="22" y2="569.2" stroke="#6b6b6b" stroke-width="1.2" />
<line x1="17" y1="587.2" x2="20.3" y2="587.2" stroke="#6b6b6b" stroke-width="1.2" />
<line x1="17" y1="605.2" x2="20.3" y2="605.2" stroke="#6b6b6b" stroke-width="1.2" />
<line x1="17" y1="623.2" x2="20.3" y2="623.2" stroke="#6b6b6b" stroke-width="1.2" />
<text class="s" x="0" y="0" font-size="13.5" fill="#5a5a5a" transform="translate(21.6,641.2) rotate(-90)" text-anchor="middle" textLength="7.4" lengthAdjust="spacingAndGlyphs">1</text>
<line x1="17" y1="659.2" x2="20.3" y2="659.2" stroke="#6b6b6b" stroke-width="1.2" />
<line x1="17" y1="677.2" x2="20.3" y2="677.2" stroke="#6b6b6b" stroke-width="1.2" />
<line x1="17" y1="695.2" x2="20.3" y2="695.2" stroke="#6b6b6b" stroke-width="1.2" />
<line x1="14.2" y1="713.2" x2="22" y2="713.2" stroke="#6b6b6b" stroke-width="1.2" />
<line x1="17" y1="731.2" x2="20.3" y2="731.2" stroke="#6b6b6b" stroke-width="1.2" />
<line x1="17" y1="749.2" x2="20.3" y2="749.2" stroke="#6b6b6b" stroke-width="1.2" />
<line x1="17" y1="767.2" x2="20.3" y2="767.2" stroke="#6b6b6b" stroke-width="1.2" />
<text class="s" x="0" y="0" font-size="13.5" fill="#5a5a5a" transform="translate(21.6,785.2) rotate(-90)" text-anchor="middle" textLength="7.4" lengthAdjust="spacingAndGlyphs">2</text>
<line x1="17" y1="803.2" x2="20.3" y2="803.2" stroke="#6b6b6b" stroke-width="1.2" />
<line x1="17" y1="821.2" x2="20.3" y2="821.2" stroke="#6b6b6b" stroke-width="1.2" />
<line x1="17" y1="839.2" x2="20.3" y2="839.2" stroke="#6b6b6b" stroke-width="1.2" />
<line x1="14.2" y1="857.2" x2="22" y2="857.2" stroke="#6b6b6b" stroke-width="1.2" />
<line x1="17" y1="875.2" x2="20.3" y2="875.2" stroke="#6b6b6b" stroke-width="1.2" />
<line x1="17" y1="893.2" x2="20.3" y2="893.2" stroke="#6b6b6b" stroke-width="1.2" />
<line x1="17" y1="911.2" x2="20.3" y2="911.2" stroke="#6b6b6b" stroke-width="1.2" />
<text class="s" x="0" y="0" font-size="13.5" fill="#5a5a5a" transform="translate(21.6,929.2) rotate(-90)" text-anchor="middle" textLength="7.4" lengthAdjust="spacingAndGlyphs">3</text>
<line x1="17" y1="947.2" x2="20.3" y2="947.2" stroke="#6b6b6b" stroke-width="1.2" />
<line x1="17" y1="965.2" x2="20.3" y2="965.2" stroke="#6b6b6b" stroke-width="1.2" />
<line x1="17" y1="983.2" x2="20.3" y2="983.2" stroke="#6b6b6b" stroke-width="1.2" />
<line x1="14.2" y1="1001.2" x2="22" y2="1001.2" stroke="#6b6b6b" stroke-width="1.2" />
<line x1="17" y1="1019.2" x2="20.3" y2="1019.2" stroke="#6b6b6b" stroke-width="1.2" />
<line x1="17" y1="1037.2" x2="20.3" y2="1037.2" stroke="#6b6b6b" stroke-width="1.2" />
<line x1="17" y1="1055.2" x2="20.3" y2="1055.2" stroke="#6b6b6b" stroke-width="1.2" />
<text class="s" x="0" y="0" font-size="13.5" fill="#5a5a5a" transform="translate(21.6,1073.2) rotate(-90)" text-anchor="middle" textLength="7.4" lengthAdjust="spacingAndGlyphs">4</text>
<line x1="17" y1="1091.2" x2="20.3" y2="1091.2" stroke="#6b6b6b" stroke-width="1.2" />
<line x1="17" y1="1109.2" x2="20.3" y2="1109.2" stroke="#6b6b6b" stroke-width="1.2" />
<line x1="17" y1="1127.2" x2="20.3" y2="1127.2" stroke="#6b6b6b" stroke-width="1.2" />
<line x1="14.2" y1="1145.2" x2="22" y2="1145.2" stroke="#6b6b6b" stroke-width="1.2" />
<line x1="17" y1="1163.2" x2="20.3" y2="1163.2" stroke="#6b6b6b" stroke-width="1.2" />
<line x1="17" y1="1181.2" x2="20.3" y2="1181.2" stroke="#6b6b6b" stroke-width="1.2" />
<line x1="17" y1="1199.2" x2="20.3" y2="1199.2" stroke="#6b6b6b" stroke-width="1.2" />
<text class="s" x="0" y="0" font-size="13.5" fill="#5a5a5a" transform="translate(21.6,1217.2) rotate(-90)" text-anchor="middle" textLength="7.4" lengthAdjust="spacingAndGlyphs">5</text>
<line x1="17" y1="1235.2" x2="20.3" y2="1235.2" stroke="#6b6b6b" stroke-width="1.2" />
<line x1="17" y1="1253.2" x2="20.3" y2="1253.2" stroke="#6b6b6b" stroke-width="1.2" />
<line x1="17" y1="1271.2" x2="20.3" y2="1271.2" stroke="#6b6b6b" stroke-width="1.2" />
<line x1="14.2" y1="1289.2" x2="22" y2="1289.2" stroke="#6b6b6b" stroke-width="1.2" />
<line x1="17" y1="1307.2" x2="20.3" y2="1307.2" stroke="#6b6b6b" stroke-width="1.2" />
<line x1="17" y1="1325.2" x2="20.3" y2="1325.2" stroke="#6b6b6b" stroke-width="1.2" />
<line x1="17" y1="1343.2" x2="20.3" y2="1343.2" stroke="#6b6b6b" stroke-width="1.2" />
<text class="s" x="0" y="0" font-size="13.5" fill="#5a5a5a" transform="translate(21.6,1361.2) rotate(-90)" text-anchor="middle" textLength="7.4" lengthAdjust="spacingAndGlyphs">6</text>
<line x1="17" y1="1379.2" x2="20.3" y2="1379.2" stroke="#6b6b6b" stroke-width="1.2" />
<line x1="17" y1="1397.2" x2="20.3" y2="1397.2" stroke="#6b6b6b" stroke-width="1.2" />
<line x1="17" y1="1415.2" x2="20.3" y2="1415.2" stroke="#6b6b6b" stroke-width="1.2" />
<line x1="14.2" y1="1433.2" x2="22" y2="1433.2" stroke="#6b6b6b" stroke-width="1.2" />
<line x1="17" y1="1451.2" x2="20.3" y2="1451.2" stroke="#6b6b6b" stroke-width="1.2" />
<line x1="17" y1="1469.2" x2="20.3" y2="1469.2" stroke="#6b6b6b" stroke-width="1.2" />
<line x1="17" y1="1487.2" x2="20.3" y2="1487.2" stroke="#6b6b6b" stroke-width="1.2" />
<text class="s" x="0" y="0" font-size="13.5" fill="#5a5a5a" transform="translate(21.6,1505.2) rotate(-90)" text-anchor="middle" textLength="7.4" lengthAdjust="spacingAndGlyphs">7</text>
<line x1="17" y1="1523.2" x2="20.3" y2="1523.2" stroke="#6b6b6b" stroke-width="1.2" />
<line x1="17" y1="1541.2" x2="20.3" y2="1541.2" stroke="#6b6b6b" stroke-width="1.2" />
<line x1="17" y1="1559.2" x2="20.3" y2="1559.2" stroke="#6b6b6b" stroke-width="1.2" />
<line x1="14.2" y1="1577.2" x2="22" y2="1577.2" stroke="#6b6b6b" stroke-width="1.2" />
<line x1="17" y1="1595.2" x2="20.3" y2="1595.2" stroke="#6b6b6b" stroke-width="1.2" />
<line x1="17" y1="1613.2" x2="20.3" y2="1613.2" stroke="#6b6b6b" stroke-width="1.2" />
<line x1="17" y1="1631.2" x2="20.3" y2="1631.2" stroke="#6b6b6b" stroke-width="1.2" />
<text class="s" x="0" y="0" font-size="13.5" fill="#5a5a5a" transform="translate(21.6,1649.2) rotate(-90)" text-anchor="middle" textLength="7.4" lengthAdjust="spacingAndGlyphs">8</text>
<line x1="17" y1="1667.2" x2="20.3" y2="1667.2" stroke="#6b6b6b" stroke-width="1.2" />
<line x1="17" y1="1685.2" x2="20.3" y2="1685.2" stroke="#6b6b6b" stroke-width="1.2" />
<line x1="17" y1="1703.2" x2="20.3" y2="1703.2" stroke="#6b6b6b" stroke-width="1.2" />
<line x1="14.2" y1="1721.2" x2="22" y2="1721.2" stroke="#6b6b6b" stroke-width="1.2" />
<line x1="17" y1="1739.2" x2="20.3" y2="1739.2" stroke="#6b6b6b" stroke-width="1.2" />
<line x1="17" y1="1757.2" x2="20.3" y2="1757.2" stroke="#6b6b6b" stroke-width="1.2" />
<line x1="17" y1="1775.2" x2="20.3" y2="1775.2" stroke="#6b6b6b" stroke-width="1.2" />
<line x1="17" y1="1811.2" x2="20.3" y2="1811.2" stroke="#6b6b6b" stroke-width="1.2" />
<line x1="17" y1="1829.2" x2="20.3" y2="1829.2" stroke="#6b6b6b" stroke-width="1.2" />
<line x1="17" y1="1847.2" x2="20.3" y2="1847.2" stroke="#6b6b6b" stroke-width="1.2" />
<line x1="14.2" y1="1865.2" x2="22" y2="1865.2" stroke="#6b6b6b" stroke-width="1.2" />
<line x1="17" y1="1883.2" x2="20.3" y2="1883.2" stroke="#6b6b6b" stroke-width="1.2" />
<line x1="17" y1="1901.2" x2="20.3" y2="1901.2" stroke="#6b6b6b" stroke-width="1.2" />
<line x1="17" y1="1919.2" x2="20.3" y2="1919.2" stroke="#6b6b6b" stroke-width="1.2" />
<rect x="423.5" y="353.5" width="1223" height="1582.5" fill="#ffffff" stroke="#c9c9c9" stroke-width="1"/>
<path d="M567 496.2 H602.5 V460.6" stroke="#a8a8a8" stroke-width="1.1" fill="none" />
<path d="M1502 496.2 H1466.8 V460.6" stroke="#a8a8a8" stroke-width="1.1" fill="none" />
<path d="M567 1793.2 H602.5 V1828.6" stroke="#a8a8a8" stroke-width="1.1" fill="none" />
<path d="M1502 1793.2 H1466.8 V1828.6" stroke="#a8a8a8" stroke-width="1.1" fill="none" />
<text class="s" x="602.3" y="547.0" font-size="48.5" textLength="501.5" lengthAdjust="spacingAndGlyphs" fill="#17365d" letter-spacing="1">Sample Document Title</text>
<line x1="723.5" y1="497.5" x2="723.5" y2="560.3" stroke="#000" stroke-width="1.3" />
<line x1="600" y1="569.6" x2="1469" y2="569.6" stroke="#4f81bd" stroke-width="2" />
<text class="s" x="603.2" y="644.8" font-size="25.5" textLength="145.2" lengthAdjust="spacingAndGlyphs" font-weight="bold" fill="#365f91">Introduction</text>
<text class="r" x="603.6" y="679.0" font-size="23.5" textLength="818.0" lengthAdjust="spacingAndGlyphs" fill="#000000">This is a sample document generated for testing purposes. It demonstrates the usage of</text>
<text class="r" x="603.6" y="708.8" font-size="23.5" textLength="772.0" lengthAdjust="spacingAndGlyphs" fill="#000000">default Microsoft Word styles such as Title, Heading, Heading 2, Strong, and Quote.</text>
<text class="s" x="602.8" y="760.9" font-size="21" textLength="86.8" lengthAdjust="spacingAndGlyphs" font-style="italic" fill="#4f81bd" letter-spacing="2">Subtitle</text>
<text class="s" x="696.5" y="760.9" font-size="21" textLength="256.5" lengthAdjust="spacingAndGlyphs" font-style="italic" fill="#4f81bd" letter-spacing="2">will be converted to H3</text>
<line x1="603.4" y1="763.6" x2="688.8" y2="763.6" stroke="#3d6fd6" stroke-width="1.1" />
<line x1="603.4" y1="766.4" x2="688.8" y2="766.4" stroke="#3d6fd6" stroke-width="1.1" />
<text class="s" x="603.0" y="815.8" font-size="21.5" textLength="128.0" lengthAdjust="spacingAndGlyphs" font-weight="bold" fill="#4f81bd">Background</text>
<text class="r" x="603.6" y="847.5" font-size="23.5" textLength="850.0" lengthAdjust="spacingAndGlyphs" fill="#000000">Word documents rely on styles to structure and format content. Default styles make it easy</text>
<text class="r" x="603.6" y="877.5" font-size="23.5" textLength="353.5" lengthAdjust="spacingAndGlyphs" fill="#000000">to maintain a consistent look and feel.</text>
<text class="r" x="603.6" y="927.0" font-size="23.5" textLength="283.0" lengthAdjust="spacingAndGlyphs" fill="#000000">This paragraph contains some</text>
<text class="r" x="891.2" y="927.0" font-size="23.5" textLength="255.0" lengthAdjust="spacingAndGlyphs" font-weight="bold" fill="#000000">strongly emphasized text</text>
<text class="r" x="1151.5" y="927.0" font-size="23.5" textLength="206.0" lengthAdjust="spacingAndGlyphs" fill="#000000">using the Strong style.</text>
<text class="r" x="603.6" y="976.4" font-size="23.5" textLength="853.0" lengthAdjust="spacingAndGlyphs" font-style="italic" fill="#000000">This is an example of a block quote style. Quotes help highlight important excerpts or external</text>
<text class="r" x="603.6" y="1006.3" font-size="23.5" textLength="97.0" lengthAdjust="spacingAndGlyphs" font-style="italic" fill="#000000">references.</text>
<text class="s" x="603.0" y="1061.0" font-size="21.5" textLength="379.0" lengthAdjust="spacingAndGlyphs" font-weight="bold" fill="#4f81bd">Key features of this test document:</text>
<circle cx="643.9" cy="1088" r="3.6" fill="#000"/>
<text class="r" x="675.8" y="1093.9" font-size="23.5" textLength="118.5" lengthAdjust="spacingAndGlyphs" fill="#000000">Bullet item 1</text>
<circle cx="643.9" cy="1118.9" r="3.6" fill="#000"/>
<text class="r" x="675.8" y="1124.8" font-size="23.5" textLength="53.0" lengthAdjust="spacingAndGlyphs" fill="#000000">Bullet</text>
<text class="r" x="735.5" y="1124.8" font-size="23.5" textLength="63.5" lengthAdjust="spacingAndGlyphs" font-weight="bold" fill="#000000">item 2</text>
<circle cx="717.7" cy="1149" r="4" fill="none" stroke="#000" stroke-width="1.3"/>
<text class="r" x="748.0" y="1154.7" font-size="23.5" textLength="53.0" lengthAdjust="spacingAndGlyphs" fill="#000000">Bullet</text>
<text class="r" x="807.5" y="1154.7" font-size="23.5" textLength="57.5" lengthAdjust="spacingAndGlyphs" font-style="italic" fill="#000000">item 3</text>
<text class="s" x="603.0" y="1208.2" font-size="21.5" textLength="350.5" lengthAdjust="spacingAndGlyphs" font-weight="bold" fill="#4f81bd">Steps to create a test document:</text>
<text class="r" x="640.2" y="1240.5" font-size="23.5" textLength="17.0" lengthAdjust="spacingAndGlyphs" fill="#000000">1.</text>
<text class="r" x="675.8" y="1240.5" font-size="23.5" textLength="47.5" lengthAdjust="spacingAndGlyphs" fill="#000000">Open</text>
<text class="r" x="729.6" y="1240.5" font-size="23.5" textLength="91.5" lengthAdjust="spacingAndGlyphs" font-weight="bold" fill="#000000">MS Word</text>
<text class="r" x="640.2" y="1270.6" font-size="23.5" textLength="17.0" lengthAdjust="spacingAndGlyphs" fill="#000000">2.</text>
<text class="r" x="675.8" y="1270.6" font-size="23.5" textLength="81.5" lengthAdjust="spacingAndGlyphs" fill="#000000">Add test</text>
<text class="r" x="762.5" y="1270.6" font-size="23.5" textLength="89.0" lengthAdjust="spacingAndGlyphs" font-style="italic" fill="#000000">structures</text>
<text class="r" x="711.6" y="1299.4" font-size="23.5" textLength="17.5" lengthAdjust="spacingAndGlyphs" fill="#000000">a.</text>
<text class="r" x="748.0" y="1299.4" font-size="23.5" textLength="224.5" lengthAdjust="spacingAndGlyphs" fill="#000000">Open in TX Text Control</text>
<text class="r" x="711.2" y="1329.6" font-size="23.5" textLength="18.0" lengthAdjust="spacingAndGlyphs" fill="#000000">b.</text>
<text class="r" x="748.0" y="1329.6" font-size="23.5" textLength="139.5" lengthAdjust="spacingAndGlyphs" fill="#000000">Test document</text>
<line x1="711" y1="1324.4" x2="887.6" y2="1324.4" stroke="#000" stroke-width="1.4" />
<text class="s" x="603.0" y="1383.4" font-size="21.5" textLength="144.5" lengthAdjust="spacingAndGlyphs" font-weight="bold" fill="#4f81bd">Sample Table</text>
<g stroke="#9a9a9a" stroke-width="1" stroke-dasharray="2.7 1.7" fill="none"><path d="M591.5 1395.5 H1456 M591.5 1445.2 H1456 M591.5 1494.4 H1456 M591.5 1543.1 H1456 M591.5 1395.5 V1543.1 M879.3 1395.5 V1543.1 M1167.2 1395.5 V1543.1 M1456 1395.5 V1543.1"/></g>
<text class="r" x="603.6" y="1415.4" font-size="23.5" textLength="87.5" lengthAdjust="spacingAndGlyphs" fill="#000000">Column 1</text>
<text class="r" x="1068.2" y="1415.4" font-size="23.5" textLength="88.0" lengthAdjust="spacingAndGlyphs" fill="#000000">Column 2</text>
<text class="r" x="1179.0" y="1415.4" font-size="23.5" textLength="88.5" lengthAdjust="spacingAndGlyphs" fill="#000000">Column 3</text>
<text class="r" x="603.6" y="1465.6" font-size="23.5" textLength="114.5" lengthAdjust="spacingAndGlyphs" fill="#000000">Row 1, Col 1</text>
<text class="r" x="1036.2" y="1465.6" font-size="23.5" textLength="120.0" lengthAdjust="spacingAndGlyphs" font-weight="bold" fill="#000000">Row 1, Col 2</text>
<text class="r" x="1179.0" y="1465.6" font-size="23.5" textLength="114.5" lengthAdjust="spacingAndGlyphs" fill="#000000">Row 1, Col 3</text>
<text class="r" x="603.6" y="1514.7" font-size="23.5" textLength="114.5" lengthAdjust="spacingAndGlyphs" fill="#000000">Row 2, Col 1</text>
<line x1="603.4" y1="1510.4" x2="719.2" y2="1510.4" stroke="#000" stroke-width="1.4" />
<text class="r" x="1042.0" y="1514.7" font-size="23.5" textLength="114.5" lengthAdjust="spacingAndGlyphs" fill="#000000">Row 2, Col 2</text>
<text class="r" x="1179.0" y="1514.7" font-size="23.5" textLength="110.5" lengthAdjust="spacingAndGlyphs" font-style="italic" fill="#000000">Row 2, Col 3</text>
<rect x="1591.5" y="358.5" width="314.5" height="1178.5" fill="#f0f0f0" stroke="#c6c6c6" stroke-width="1" filter="url(#sh2)"/>
<text class="s" x="1608.3" y="397.2" font-size="22" textLength="57.5" lengthAdjust="spacingAndGlyphs" fill="#262626" stroke="#262626" stroke-width="0.55">Styles</text>
<path d="M1816.2 384.2 L1826.3 394.6 L1836.4 384.2" stroke="#333" stroke-width="1.5" fill="none" />
<line x1="1867.8" y1="381.8" x2="1882.2" y2="396.8" stroke="#333" stroke-width="1.5" />
<line x1="1882.2" y1="381.8" x2="1867.8" y2="396.8" stroke="#333" stroke-width="1.5" />
<clipPath id="lclip"><rect x="1608" y="418" width="282" height="987"/></clipPath>
<rect x="1608" y="418" width="282" height="987" fill="#ffffff" />
<g clip-path="url(#lclip)">
<text class="s" x="1619.3" y="435.6" font-size="16" textLength="69.7" lengthAdjust="spacingAndGlyphs" fill="#262626">Heading 4</text>
<text class="s" x="1822.0" y="431.8" font-size="12.5" textLength="12.5" lengthAdjust="spacingAndGlyphs" font-weight="bold" fill="#6e6e6e">¶a</text>
<line x1="1822" y1="434.0" x2="1834.4" y2="434.0" stroke="#6e6e6e" stroke-width="1.4" />
<text class="s" x="1619.3" y="467.6" font-size="16" textLength="28.3" lengthAdjust="spacingAndGlyphs" fill="#262626">Title</text>
<text class="s" x="1822.0" y="463.8" font-size="12.5" textLength="12.5" lengthAdjust="spacingAndGlyphs" font-weight="bold" fill="#6e6e6e">¶a</text>
<line x1="1822" y1="466.0" x2="1834.4" y2="466.0" stroke="#6e6e6e" stroke-width="1.4" />
<text class="s" x="1619.3" y="499.6" font-size="16" textLength="51.0" lengthAdjust="spacingAndGlyphs" fill="#262626">Subtitle</text>
<text class="s" x="1822.0" y="495.8" font-size="12.5" textLength="12.5" lengthAdjust="spacingAndGlyphs" font-weight="bold" fill="#6e6e6e">¶a</text>
<line x1="1822" y1="498.0" x2="1834.4" y2="498.0" stroke="#6e6e6e" stroke-width="1.4" />
<text class="s" x="1619.3" y="531.6" font-size="16" textLength="114.7" lengthAdjust="spacingAndGlyphs" fill="#262626">Subtle Emphasis</text>
<text class="s" x="1827.6" y="528.4" font-size="13" textLength="7.4" lengthAdjust="spacingAndGlyphs" font-weight="bold" fill="#6e6e6e">a</text>
<text class="s" x="1619.3" y="563.6" font-size="16" textLength="67.1" lengthAdjust="spacingAndGlyphs" fill="#262626">Emphasis</text>
<text class="s" x="1827.6" y="560.4" font-size="13" textLength="7.4" lengthAdjust="spacingAndGlyphs" font-weight="bold" fill="#6e6e6e">a</text>
<text class="s" x="1619.3" y="595.6" font-size="16" textLength="121.5" lengthAdjust="spacingAndGlyphs" fill="#262626">Intense Emphasis</text>
<text class="s" x="1827.6" y="592.4" font-size="13" textLength="7.4" lengthAdjust="spacingAndGlyphs" font-weight="bold" fill="#6e6e6e">a</text>
<text class="s" x="1619.3" y="627.6" font-size="16" textLength="45.0" lengthAdjust="spacingAndGlyphs" fill="#262626">Strong</text>
<text class="s" x="1827.6" y="624.4" font-size="13" textLength="7.4" lengthAdjust="spacingAndGlyphs" font-weight="bold" fill="#6e6e6e">a</text>
<text class="s" x="1619.3" y="659.6" font-size="16" textLength="41.6" lengthAdjust="spacingAndGlyphs" fill="#262626">Quote</text>
<text class="s" x="1822.0" y="655.8" font-size="12.5" textLength="12.5" lengthAdjust="spacingAndGlyphs" font-weight="bold" fill="#6e6e6e">¶a</text>
<line x1="1822" y1="658.0" x2="1834.4" y2="658.0" stroke="#6e6e6e" stroke-width="1.4" />
<text class="s" x="1619.3" y="691.6" font-size="16" textLength="96.0" lengthAdjust="spacingAndGlyphs" fill="#262626">Intense Quote</text>
<text class="s" x="1822.0" y="687.8" font-size="12.5" textLength="12.5" lengthAdjust="spacingAndGlyphs" font-weight="bold" fill="#6e6e6e">¶a</text>
<line x1="1822" y1="690.0" x2="1834.4" y2="690.0" stroke="#6e6e6e" stroke-width="1.4" />
<text class="s" x="1619.3" y="723.6" font-size="16" textLength="118.1" lengthAdjust="spacingAndGlyphs" fill="#262626">Subtle Reference</text>
<text class="s" x="1827.6" y="720.4" font-size="13" textLength="7.4" lengthAdjust="spacingAndGlyphs" font-weight="bold" fill="#6e6e6e">a</text>
<text class="s" x="1619.3" y="755.6" font-size="16" textLength="124.9" lengthAdjust="spacingAndGlyphs" fill="#262626">Intense Reference</text>
<text class="s" x="1827.6" y="752.4" font-size="13" textLength="7.4" lengthAdjust="spacingAndGlyphs" font-weight="bold" fill="#6e6e6e">a</text>
<text class="s" x="1619.3" y="787.6" font-size="16" textLength="67.1" lengthAdjust="spacingAndGlyphs" fill="#262626">Book Title</text>
<text class="s" x="1827.6" y="784.4" font-size="13" textLength="7.4" lengthAdjust="spacingAndGlyphs" font-weight="bold" fill="#6e6e6e">a</text>
<text class="s" x="1619.3" y="819.6" font-size="16" textLength="99.4" lengthAdjust="spacingAndGlyphs" fill="#262626">List Paragraph</text>
<text class="s" x="1825.0" y="817.1" font-size="14" textLength="9.2" lengthAdjust="spacingAndGlyphs" font-weight="bold" fill="#6e6e6e">¶</text>
<text class="s" x="1619.3" y="851.6" font-size="16" textLength="66.8" lengthAdjust="spacingAndGlyphs" fill="#262626">Body Text</text>
<text class="s" x="1822.0" y="847.8" font-size="12.5" textLength="12.5" lengthAdjust="spacingAndGlyphs" font-weight="bold" fill="#6e6e6e">¶a</text>
<line x1="1822" y1="850.0" x2="1834.4" y2="850.0" stroke="#6e6e6e" stroke-width="1.4" />
<text class="s" x="1619.3" y="883.6" font-size="16" textLength="79.6" lengthAdjust="spacingAndGlyphs" fill="#262626">Body Text 2</text>
<text class="s" x="1822.0" y="879.8" font-size="12.5" textLength="12.5" lengthAdjust="spacingAndGlyphs" font-weight="bold" fill="#6e6e6e">¶a</text>
<line x1="1822" y1="882.0" x2="1834.4" y2="882.0" stroke="#6e6e6e" stroke-width="1.4" />
<text class="s" x="1619.3" y="915.6" font-size="16" textLength="79.6" lengthAdjust="spacingAndGlyphs" fill="#262626">Body Text 3</text>
<text class="s" x="1822.0" y="911.8" font-size="12.5" textLength="12.5" lengthAdjust="spacingAndGlyphs" font-weight="bold" fill="#6e6e6e">¶a</text>
<line x1="1822" y1="914.0" x2="1834.4" y2="914.0" stroke="#6e6e6e" stroke-width="1.4" />
<text class="s" x="1619.3" y="947.6" font-size="16" textLength="44.2" lengthAdjust="spacingAndGlyphs" fill="#262626">Footer</text>
<text class="s" x="1822.0" y="943.8" font-size="12.5" textLength="12.5" lengthAdjust="spacingAndGlyphs" font-weight="bold" fill="#6e6e6e">¶a</text>
<line x1="1822" y1="946.0" x2="1834.4" y2="946.0" stroke="#6e6e6e" stroke-width="1.4" />
<text class="s" x="1619.3" y="979.6" font-size="16" textLength="50.1" lengthAdjust="spacingAndGlyphs" fill="#262626">Header</text>
<text class="s" x="1822.0" y="975.8" font-size="12.5" textLength="12.5" lengthAdjust="spacingAndGlyphs" font-weight="bold" fill="#6e6e6e">¶a</text>
<line x1="1822" y1="978.0" x2="1834.4" y2="978.0" stroke="#6e6e6e" stroke-width="1.4" />
<text class="s" x="1619.3" y="1011.6" font-size="16" textLength="23.8" lengthAdjust="spacingAndGlyphs" fill="#262626">List</text>
<text class="s" x="1825.0" y="1009.1" font-size="14" textLength="9.2" lengthAdjust="spacingAndGlyphs" font-weight="bold" fill="#6e6e6e">¶</text>
<text class="s" x="1619.3" y="1043.6" font-size="16" textLength="36.5" lengthAdjust="spacingAndGlyphs" fill="#262626">List 2</text>
<text class="s" x="1825.0" y="1041.1" font-size="14" textLength="9.2" lengthAdjust="spacingAndGlyphs" font-weight="bold" fill="#6e6e6e">¶</text>
<text class="s" x="1619.3" y="1075.6" font-size="16" textLength="36.5" lengthAdjust="spacingAndGlyphs" fill="#262626">List 3</text>
<text class="s" x="1825.0" y="1073.1" font-size="14" textLength="9.2" lengthAdjust="spacingAndGlyphs" font-weight="bold" fill="#6e6e6e">¶</text>
<text class="s" x="1619.3" y="1107.6" font-size="16" textLength="66.2" lengthAdjust="spacingAndGlyphs" fill="#262626">List Bullet</text>
<text class="s" x="1825.0" y="1105.1" font-size="14" textLength="9.2" lengthAdjust="spacingAndGlyphs" font-weight="bold" fill="#6e6e6e">¶</text>
<text class="s" x="1619.3" y="1139.6" font-size="16" textLength="79.0" lengthAdjust="spacingAndGlyphs" fill="#262626">List Bullet 2</text>
<text class="s" x="1825.0" y="1137.1" font-size="14" textLength="9.2" lengthAdjust="spacingAndGlyphs" font-weight="bold" fill="#6e6e6e">¶</text>
<text class="s" x="1619.3" y="1171.6" font-size="16" textLength="79.0" lengthAdjust="spacingAndGlyphs" fill="#262626">List Bullet 3</text>
<text class="s" x="1825.0" y="1169.1" font-size="14" textLength="9.2" lengthAdjust="spacingAndGlyphs" font-weight="bold" fill="#6e6e6e">¶</text>
<text class="s" x="1619.3" y="1203.6" font-size="16" textLength="89.2" lengthAdjust="spacingAndGlyphs" fill="#262626">List Continue</text>
<text class="s" x="1825.0" y="1201.1" font-size="14" textLength="9.2" lengthAdjust="spacingAndGlyphs" font-weight="bold" fill="#6e6e6e">¶</text>
<text class="s" x="1619.3" y="1235.6" font-size="16" textLength="101.9" lengthAdjust="spacingAndGlyphs" fill="#262626">List Continue 2</text>
<text class="s" x="1825.0" y="1233.1" font-size="14" textLength="9.2" lengthAdjust="spacingAndGlyphs" font-weight="bold" fill="#6e6e6e">¶</text>
<text class="s" x="1619.3" y="1267.6" font-size="16" textLength="101.9" lengthAdjust="spacingAndGlyphs" fill="#262626">List Continue 3</text>
<text class="s" x="1825.0" y="1265.1" font-size="14" textLength="9.2" lengthAdjust="spacingAndGlyphs" font-weight="bold" fill="#6e6e6e">¶</text>
<text class="s" x="1619.3" y="1299.6" font-size="16" textLength="82.4" lengthAdjust="spacingAndGlyphs" fill="#262626">List Number</text>
<text class="s" x="1825.0" y="1297.1" font-size="14" textLength="9.2" lengthAdjust="spacingAndGlyphs" font-weight="bold" fill="#6e6e6e">¶</text>
<text class="s" x="1619.3" y="1331.6" font-size="16" textLength="95.1" lengthAdjust="spacingAndGlyphs" fill="#262626">List Number 2</text>
<text class="s" x="1825.0" y="1329.1" font-size="14" textLength="9.2" lengthAdjust="spacingAndGlyphs" font-weight="bold" fill="#6e6e6e">¶</text>
<text class="s" x="1619.3" y="1363.6" font-size="16" textLength="95.1" lengthAdjust="spacingAndGlyphs" fill="#262626">List Number 3</text>
<text class="s" x="1825.0" y="1361.1" font-size="14" textLength="9.2" lengthAdjust="spacingAndGlyphs" font-weight="bold" fill="#6e6e6e">¶</text>
<text class="s" x="1619.3" y="1395.6" font-size="16" textLength="74.4" lengthAdjust="spacingAndGlyphs" fill="#262626">Macro Text</text>
<text class="s" x="1822.0" y="1391.8" font-size="12.5" textLength="12.5" lengthAdjust="spacingAndGlyphs" font-weight="bold" fill="#6e6e6e">¶a</text>
<line x1="1822" y1="1394.0" x2="1834.4" y2="1394.0" stroke="#6e6e6e" stroke-width="1.4" />
</g>
<rect x="1609.2" y="446.2" width="227.6" height="29.6" fill="none" stroke="#2b579a" stroke-width="2.4"/>
<rect x="1609" y="1413.2" width="18.6" height="18.2" rx="2.5" fill="#ffffff" stroke="#5e5e5e" stroke-width="1.4"/>
<rect x="1609" y="1449.3" width="18.6" height="18.2" rx="2.5" fill="#ffffff" stroke="#5e5e5e" stroke-width="1.4"/>
<text class="s" x="1636.0" y="1428.7" font-size="17" textLength="109.5" lengthAdjust="spacingAndGlyphs" fill="#262626">Show Preview</text>
<text class="s" x="1636.0" y="1464.6" font-size="17" textLength="164.0" lengthAdjust="spacingAndGlyphs" fill="#262626">Disable Linked Styles</text>
<rect x="1608.8" y="1483" width="37" height="36.4" rx="5" fill="#ffffff" stroke="#9a9a9a" stroke-width="1"/>
<rect x="1660.5" y="1483" width="37" height="36.4" rx="5" fill="#ffffff" stroke="#9a9a9a" stroke-width="1"/>
<rect x="1712.6" y="1483" width="37" height="36.4" rx="5" fill="#ffffff" stroke="#9a9a9a" stroke-width="1"/>
<path d="M1615.4 1509.7 L1623.4 1491.2 L1631.4 1509.7 M1618.9 1503.4 H1627.9" stroke="#333" stroke-width="1.5" fill="none" />
<path d="M1633.8 1500.5 V1512.5 M1627.8 1506.5 H1639.8" stroke="#2e9b3e" stroke-width="1.8" fill="none" />
<path d="M1667.3 1509.7 L1674.3 1491.2 L1681.3 1509.7 M1670.4 1503.4 H1678.2" stroke="#333" stroke-width="1.5" fill="none" />
<circle cx="1682.5" cy="1503.8" r="4.6" fill="#ffffff" stroke="#1f8ad6" stroke-width="1.6"/>
<line x1="1685.8" y1="1507.2" x2="1690.6" y2="1512.4" stroke="#1f8ad6" stroke-width="1.8" />
<path d="M1719.2 1509.7 L1727.2 1491.2 L1735.2 1509.7 M1722.7 1503.4 H1731.7" stroke="#333" stroke-width="1.5" fill="none" />
<path d="M1727 1508 L1732 1512.8 L1742.5 1501.6" stroke="#2e9b3e" stroke-width="1.8" fill="none" />
<rect x="1764.8" y="1483" width="99.6" height="33.4" rx="5" fill="#ffffff" stroke="#9a9a9a" stroke-width="1"/>
<text class="s" x="1776.3" y="1505.8" font-size="17" textLength="75.5" lengthAdjust="spacingAndGlyphs" fill="#262626">Options...</text>
<rect x="0" y="1988" width="2062" height="33" fill="#f3f3f3" />
<line x1="0" y1="1988.5" x2="2062" y2="1988.5" stroke="#ffffff" stroke-width="1.2" />
<text class="s" x="16.4" y="2011.4" font-size="16" textLength="75.5" lengthAdjust="spacingAndGlyphs" fill="#424242">Page 1 of 1</text>
<text class="s" x="122.8" y="2011.4" font-size="16" textLength="73.0" lengthAdjust="spacingAndGlyphs" fill="#424242">159 words</text>
<path d="M236 2014.3 H224.8 V1997 H235.5 L238.5 2000 V2004.5" stroke="#404040" stroke-width="1.3" fill="none" />
<path d="M229.8 2014.3 V1997" stroke="#404040" stroke-width="1.1" fill="none" />
<path d="M235.5 2005.5 L244.5 2014.5 M244.5 2005.5 L235.5 2014.5" stroke="#404040" stroke-width="1.4" fill="none" />
<text class="s" x="270.1" y="2011.4" font-size="16" textLength="154.5" lengthAdjust="spacingAndGlyphs" fill="#424242">English (United States)</text>
<text class="s" x="452.6" y="2011.4" font-size="16" textLength="135.5" lengthAdjust="spacingAndGlyphs" fill="#424242">Text Predictions: On</text>
<path d="M617.2 2013 V1997.4 H638.6 V2006" stroke="#404040" stroke-width="1.3" fill="none" />
<line x1="617.2" y1="2001.5" x2="638.6" y2="2001.5" stroke="#404040" stroke-width="1.2" />
<line x1="620.5" y1="2005.5" x2="627" y2="2005.5" stroke="#404040" stroke-width="1.1" />
<line x1="620.5" y1="2009.5" x2="626" y2="2009.5" stroke="#404040" stroke-width="1.1" />
<circle cx="633" cy="2009" r="5" fill="#ffffff" stroke="#404040" stroke-width="1.3"/>
<circle cx="633" cy="2009" r="2.3" fill="#404040"/>
<circle cx="673.5" cy="1997.4" r="2.4" fill="none" stroke="#404040" stroke-width="1.3"/>
<path d="M664.5 2002.5 C668 2003.5 679 2003.5 683 2002.5 M673.5 2003.3 V2007.5 L669 2015.2 M673.5 2007.5 L676.5 2012.5" stroke="#404040" stroke-width="1.3" fill="none" />
<path d="M678.5 2008 L685.8 2015.5 M685.8 2008 L678.5 2015.5" stroke="#404040" stroke-width="1.4" fill="none" />
<text class="s" x="691.6" y="2011.4" font-size="16" textLength="187.5" lengthAdjust="spacingAndGlyphs" font-weight="bold" fill="#262626">Accessibility: Investigate</text>
<path d="M1516.6 1999 V1994 H1521.5 M1532 1994 H1537 V1999 M1537 2009.5 V2014.5 H1532 M1521.5 2014.5 H1516.6 V2009.5" stroke="#404040" stroke-width="1.4" fill="none" />
<path d="M1521.5 2010.5 V1997.5 H1528.5 L1532 2001 V2010.5 Z" stroke="#404040" stroke-width="1.2" fill="none" />
<text class="s" x="1542.3" y="2011.4" font-size="16" textLength="39.5" lengthAdjust="spacingAndGlyphs" fill="#424242">Focus</text>
<path d="M1627.9 1996.5 C1624.5 1995.2 1621 1995.2 1618 1996.5 V2012.8 C1621 2011.5 1624.5 2011.5 1627.9 2012.8 C1631.3 2011.5 1634.8 2011.5 1637.8 2012.8 V1996.5 C1634.8 1995.2 1631.3 1995.2 1627.9 1996.5 Z M1627.9 1996.5 V2012.8" stroke="#404040" stroke-width="1.3" fill="none" />
<line x1="1620.5" y1="2001" x2="1625.6" y2="2001" stroke="#404040" stroke-width="1" />
<line x1="1620.5" y1="2004.5" x2="1625.6" y2="2004.5" stroke="#404040" stroke-width="1" />
<line x1="1630.2" y1="2001" x2="1635.4" y2="2001" stroke="#404040" stroke-width="1" />
<line x1="1630.2" y1="2004.5" x2="1635.4" y2="2004.5" stroke="#404040" stroke-width="1" />
<rect x="1659.3" y="1989.4" width="59.5" height="31.6" fill="#e0e0e0" />
<rect x="1679.6" y="1995.8" width="16.4" height="19" fill="none" stroke="#404040" stroke-width="1.3"/>
<line x1="1682.5" y1="1999.5" x2="1693" y2="1999.5" stroke="#404040" stroke-width="1.1" />
<line x1="1682.5" y1="2002.5" x2="1693" y2="2002.5" stroke="#404040" stroke-width="1.1" />
<line x1="1682.5" y1="2005.5" x2="1693" y2="2005.5" stroke="#404040" stroke-width="1.1" />
<line x1="1682.5" y1="2008.5" x2="1693" y2="2008.5" stroke="#404040" stroke-width="1.1" />
<line x1="1682.5" y1="2011.5" x2="1693" y2="2011.5" stroke="#404040" stroke-width="1.1" />
<path d="M1749 2014.5 H1738.6 V1995.8 H1759.6 V2003.5" stroke="#404040" stroke-width="1.3" fill="none" />
<line x1="1741.5" y1="2000" x2="1756" y2="2000" stroke="#404040" stroke-width="1.1" />
<line x1="1741.5" y1="2004" x2="1748" y2="2004" stroke="#404040" stroke-width="1.1" />
<line x1="1741.5" y1="2008" x2="1747" y2="2008" stroke="#404040" stroke-width="1.1" />
<circle cx="1755" cy="2010" r="5.4" fill="#f3f3f3" stroke="#404040" stroke-width="1.2"/>
<path d="M1749.6 2010 H1760.4 M1755 2004.6 C1752.5 2007 1752.5 2013 1755 2015.4 C1757.5 2013 1757.5 2007 1755 2004.6" stroke="#404040" stroke-width="1" fill="none" />
<line x1="1787" y1="2004.8" x2="1798.4" y2="2004.8" stroke="#404040" stroke-width="1.3" />
<line x1="1806.4" y1="2004.8" x2="1954" y2="2004.8" stroke="#8a8a8a" stroke-width="1.2" />
<rect x="1877" y="1995.8" width="7.4" height="17.5" fill="#5f5f5f" rx="1.5"/>
<line x1="1962" y1="2004.8" x2="1974.2" y2="2004.8" stroke="#404040" stroke-width="1.3" />
<line x1="1968.1" y1="1998.7" x2="1968.1" y2="2010.9" stroke="#404040" stroke-width="1.3" />
<text class="s" x="1993.8" y="2011.4" font-size="16" textLength="39.0" lengthAdjust="spacingAndGlyphs" fill="#424242">100%</text>
</svg>
</body></html>
